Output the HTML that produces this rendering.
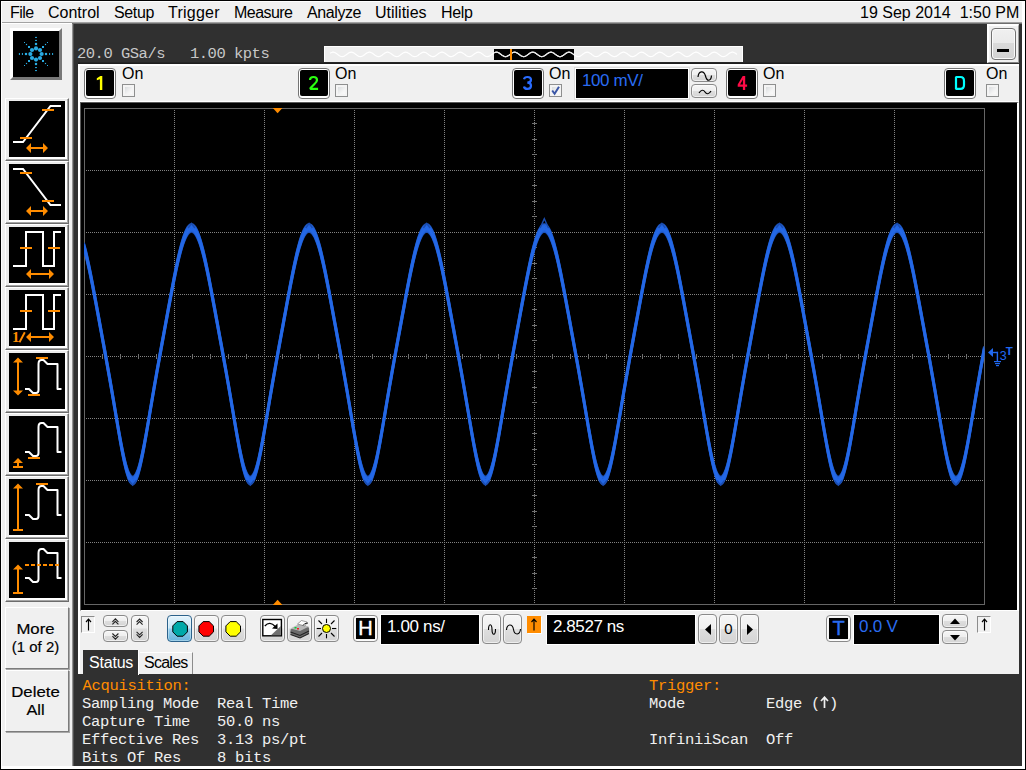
<!DOCTYPE html>
<html>
<head>
<meta charset="utf-8">
<title>Oscilloscope</title>
<style>
html,body{margin:0;padding:0;}
body{width:1026px;height:770px;overflow:hidden;background:#f0f0f0;position:relative;font-family:"Liberation Sans",sans-serif;color:#000;}
.abs{position:absolute;}
#frame{left:0;top:0;width:1024px;height:768px;border:1px solid #000;}
#whiteR{left:1022px;top:1px;width:3px;height:768px;background:#fff;}
#whiteB{left:1px;top:766px;width:1024px;height:3px;background:#fff;}
#menubar{left:1px;top:1px;width:1024px;height:21px;background:#f0f0f0;border-bottom:1px solid #a2a2a2;}#wl{left:1px;top:1px;width:1px;height:768px;background:#fff;}#wt{left:1px;top:1px;width:1024px;height:1px;background:#fff;}#wm{left:1px;top:23px;width:71px;height:1px;background:#fff;}#mline{left:72px;top:23px;width:950px;height:1px;background:#6e6e6e;}
.mi{position:absolute;top:3px;font-size:16px;line-height:18px;white-space:nowrap;}
#dark{left:72px;top:24px;width:950px;height:742px;background:#303030;}
#split{left:72px;top:24px;width:6px;height:742px;background:linear-gradient(90deg,#929292 0,#929292 1px,#505050 1px,#505050 2px,#303030 2px,#303030 100%);}
#leftp{left:1px;top:23px;width:71px;height:743px;background:#f0f0f0;}
.mono{font-family:"Liberation Mono",monospace;}
#acq,#acq2{top:44.5px;font-size:15.5px;line-height:18px;color:#c8c8c8;white-space:pre;letter-spacing:-0.5px;}#acq{left:77px;}#acq2{left:190px;}
#membar{left:324px;top:46px;width:419px;height:16px;background:#eeeeee;box-shadow:inset 0 1px 0 #fff, inset 1px 0 0 #fff, inset -1px 0 0 #fff;}
#memblk{left:494px;top:49px;width:80px;height:11px;background:#000;}
#memor{left:510px;top:49px;width:2px;height:11px;background:#ff8c00;}#dline{left:78px;top:62px;width:909px;height:2px;background:linear-gradient(180deg,#2a2a2a,#1a1a1a);}
#minarea{left:987px;top:24px;width:32px;height:39px;background:#f0f0f0;box-sizing:border-box;border-left:2px solid #fff;border-top:2px solid #fff;border-right:1px solid #a0a0a0;border-bottom:1px solid #808080;}
#minbtn{left:991px;top:28px;width:23px;height:30px;border:1px solid #727272;border-radius:4px;background:linear-gradient(180deg,#f0f0f0 0,#eaeaea 47%,#dadada 47%,#d2d2d2 100%);box-shadow:inset 0 0 0 1px #fafafa;}
#minbtn i{position:absolute;left:5px;top:20px;width:12px;height:3px;background:#000;}
#chrow{left:78px;top:64px;width:941px;height:38px;background:#f0f0f0;border-top:2px solid #fff;border-bottom:1px solid #fff;box-sizing:border-box;}
.chb{position:absolute;top:68px;width:30px;height:29px;border:1px solid #747474;border-radius:4px;background:#fff;}
.chb b{position:absolute;left:1px;top:1px;width:28px;height:26px;background:#000;border-radius:2px;font-weight:normal;font-size:19.5px;line-height:26px;text-align:center;-webkit-text-stroke:0.45px currentColor;}
.on{position:absolute;top:65px;font-size:16px;line-height:18px;}
.cb{position:absolute;top:84px;width:11px;height:11px;border:1px solid #8e8f8f;background:linear-gradient(135deg,#cfd3d6 0,#f4f4f4 60%,#fff 100%);box-shadow:inset 0 0 0 2px #f4f4f4;}
#scope{left:80px;top:102px;width:936px;height:507px;background:#000;border-left:1px solid #5a5a5a;border-top:1px solid #5a5a5a;border-right:2px solid #fff;border-bottom:1px solid #fff;}
#toolbar{left:78px;top:611px;width:941px;height:63px;background:#f0f0f0;}#wstrip{left:78px;top:64px;width:2px;height:610px;background:#fff;}
#status{left:78px;top:674px;width:944px;height:92px;background:#303030;}
.st{position:absolute;font-size:15.5px;letter-spacing:-0.3px;line-height:18px;color:#f0f0f0;white-space:pre;font-family:"Liberation Mono",monospace;}
.or{color:#ff8c00;}

.ib{position:absolute;left:5px;width:62px;height:61px;border-top:1px solid #fff;border-left:1px solid #fff;border-right:1px solid #6c6c6c;border-bottom:1px solid #6c6c6c;background:#ececec;box-shadow:inset -1px -1px 0 #a6a6a6;}
.ib svg{position:absolute;left:3px;top:2px;box-shadow:2px 0 0 #fff,0 2px 0 #fff,2px 2px 0 #fff;}
.lb{position:absolute;left:5px;width:62px;height:60px;border-top:1px solid #fff;border-left:1px solid #fff;border-right:1px solid #7c7c7c;border-bottom:1px solid #7c7c7c;background:#f0f0f0;box-shadow:1px 1px 0 #a8a8a8;font-size:14px;line-height:18px;text-align:center;}
.lbl{position:absolute;left:0;width:71px;text-align:center;font-size:14.5px;line-height:18px;-webkit-text-stroke:0.18px #000;white-space:nowrap;}
.tb{position:absolute;border:1px solid #8a8a8a;border-radius:4px;background:linear-gradient(180deg,#f6f6f6 0,#efefef 49%,#dedede 51%,#d4d4d4 100%);box-sizing:border-box;box-shadow:inset 0 0 0 1px rgba(255,255,255,.6);}
.tb svg{position:absolute;left:0;top:0;}
.fld{position:absolute;background:#000;border:1px solid #fff;box-sizing:border-box;font-size:17px;line-height:20px;color:#fff;white-space:nowrap;}
.sunk{position:absolute;box-sizing:border-box;border-top:1px solid #8c8c8c;border-left:1px solid #8c8c8c;border-right:1px solid #fff;border-bottom:1px solid #fff;background:#f0f0f0;}
.tab{position:absolute;font-size:16px;line-height:20px;white-space:nowrap;box-sizing:border-box;}
</style>
</head>
<body>
<div id="dark" class="abs"></div>
<div id="split" class="abs"></div>
<div id="leftp" class="abs"></div><div id="mline" class="abs"></div>
<div id="menubar" class="abs">
 <span class="mi" style="left:9px;letter-spacing:-0.55px">File</span>
 <span class="mi" style="left:47px">Control</span>
 <span class="mi" style="left:113px;letter-spacing:-0.35px">Setup</span>
 <span class="mi" style="left:167px;letter-spacing:0.25px">Trigger</span>
 <span class="mi" style="left:233px;letter-spacing:-0.55px">Measure</span>
 <span class="mi" style="left:306px;letter-spacing:-0.4px">Analyze</span>
 <span class="mi" style="left:374px">Utilities</span>
 <span class="mi" style="left:440px;letter-spacing:-0.3px">Help</span>
 <span class="mi" style="left:859px">19 Sep 2014&nbsp; 1:50 PM</span>
</div>

<!-- left panel -->
<div class="abs" style="left:10px;top:28px;width:46px;height:46px;border:3px solid;border-color:#fff #787878 #787878 #fff;background:#000"><svg width="46" height="46" viewBox="-23 -23 46 46" style="position:absolute;left:0;top:0"><circle cx="5.6" cy="0.0" r="2.1" fill="#29abe2"/><circle cx="4.0" cy="4.0" r="2.1" fill="#29abe2"/><circle cx="0.0" cy="5.6" r="2.1" fill="#29abe2"/><circle cx="-4.0" cy="4.0" r="2.1" fill="#29abe2"/><circle cx="-5.6" cy="0.0" r="2.1" fill="#29abe2"/><circle cx="-4.0" cy="-4.0" r="2.1" fill="#29abe2"/><circle cx="-0.0" cy="-5.6" r="2.1" fill="#29abe2"/><circle cx="4.0" cy="-4.0" r="2.1" fill="#29abe2"/><rect x="8.9" y="-1.1" width="2.2" height="2.2" fill="#29abe2"/><rect x="13.1" y="-1" width="1" height="2" fill="#29abe2"/><rect x="16.1" y="-1" width="1" height="2" fill="#29abe2"/><rect x="6.0" y="6.0" width="2" height="2" fill="#29abe2"/><rect x="8.9" y="8.9" width="1.2" height="1.2" fill="#29abe2"/><rect x="11.0" y="11.0" width="1" height="1" fill="#29abe2"/><rect x="-1.1" y="8.9" width="2.2" height="2.2" fill="#29abe2"/><rect x="-1" y="13.1" width="2" height="1" fill="#29abe2"/><rect x="-1" y="16.1" width="2" height="1" fill="#29abe2"/><rect x="-8.0" y="6.0" width="2" height="2" fill="#29abe2"/><rect x="-10.1" y="8.9" width="1.2" height="1.2" fill="#29abe2"/><rect x="-12.0" y="11.0" width="1" height="1" fill="#29abe2"/><rect x="-11.1" y="-1.1" width="2.2" height="2.2" fill="#29abe2"/><rect x="-14.1" y="-1" width="1" height="2" fill="#29abe2"/><rect x="-17.1" y="-1" width="1" height="2" fill="#29abe2"/><rect x="-8.0" y="-8.0" width="2" height="2" fill="#29abe2"/><rect x="-10.1" y="-10.1" width="1.2" height="1.2" fill="#29abe2"/><rect x="-12.0" y="-12.0" width="1" height="1" fill="#29abe2"/><rect x="-1.1" y="-11.1" width="2.2" height="2.2" fill="#29abe2"/><rect x="-1" y="-14.1" width="2" height="1" fill="#29abe2"/><rect x="-1" y="-17.1" width="2" height="1" fill="#29abe2"/><rect x="6.0" y="-8.0" width="2" height="2" fill="#29abe2"/><rect x="8.9" y="-10.1" width="1.2" height="1.2" fill="#29abe2"/><rect x="11.0" y="-12.0" width="1" height="1" fill="#29abe2"/></svg></div>
<div class="ib" style="top:98px"><svg width="56" height="56" viewBox="0 0 56 56" style="background:#000" shape-rendering="crispEdges"><path d="M4 41 h10 L41.5 5 h10.5" fill="none" stroke="#fff" stroke-width="2" shape-rendering="geometricPrecision"/><rect x="33" y="8" width="12" height="2" fill="#ff8c00"/><rect x="11" y="36" width="12" height="2" fill="#ff8c00"/><path d="M17 47 l5 -5 v4 h12 v-4 l5 5 l-5 5 v-4 h-12 v4 z" fill="#ff8c00" shape-rendering="geometricPrecision"/></svg></div>
<div class="ib" style="top:161px"><svg width="56" height="56" viewBox="0 0 56 56" style="background:#000" shape-rendering="crispEdges"><path d="M4 5 h10 L41.5 41 h10.5" fill="none" stroke="#fff" stroke-width="2" shape-rendering="geometricPrecision"/><rect x="11" y="8" width="12" height="2" fill="#ff8c00"/><rect x="33" y="36" width="12" height="2" fill="#ff8c00"/><path d="M17 47 l5 -5 v4 h12 v-4 l5 5 l-5 5 v-4 h-12 v4 z" fill="#ff8c00" shape-rendering="geometricPrecision"/></svg></div>
<div class="ib" style="top:224px"><svg width="56" height="56" viewBox="0 0 56 56" style="background:#000" shape-rendering="crispEdges"><path d="M4 39 h13 v-34 h17 v34 h11 v-34 h7" fill="none" stroke="#fff" stroke-width="2"/><rect x="11" y="20" width="12" height="2" fill="#ff8c00"/><rect x="39" y="20" width="12" height="2" fill="#ff8c00"/><path d="M17 47 l5 -5 v4 h18 v-4 l5 5 l-5 5 v-4 h-18 v4 z" fill="#ff8c00" shape-rendering="geometricPrecision"/></svg></div>
<div class="ib" style="top:287px"><svg width="56" height="56" viewBox="0 0 56 56" style="background:#000" shape-rendering="crispEdges"><path d="M4 39 h13 v-34 h17 v34 h11 v-34 h7" fill="none" stroke="#fff" stroke-width="2"/><rect x="11" y="20" width="12" height="2" fill="#ff8c00"/><rect x="39" y="20" width="12" height="2" fill="#ff8c00"/><path d="M17 47 l5 -5 v4 h18 v-4 l5 5 l-5 5 v-4 h-18 v4 z" fill="#ff8c00" shape-rendering="geometricPrecision"/><text x="3" y="52" font-family="Liberation Serif" font-weight="bold" font-size="15" fill="#ff8c00" shape-rendering="geometricPrecision">1</text><path d="M10.500 52.300 L15.800 42.300" stroke="#ff8c00" stroke-width="1.900" shape-rendering="geometricPrecision"/></svg></div>
<div class="ib" style="top:350px"><svg width="56" height="56" viewBox="0 0 56 56" style="background:#000" shape-rendering="crispEdges"><path d="M16 36 h4 l4 4 h3 q2.5 0 2.5 -3 v-26 q0 -4 3 -4 h2 l4 4 h10 v25 h4" fill="none" stroke="#fff" stroke-width="2" stroke-linejoin="round" shape-rendering="geometricPrecision"/><rect x="27" y="4" width="12" height="2" fill="#ff8c00"/><rect x="19" y="41" width="12" height="2" fill="#ff8c00"/><path d="M9 4.5 l5 5 h-4 v28 h4 l-5 5 l-5 -5 h4 v-28 h-4 z" fill="#ff8c00" shape-rendering="geometricPrecision"/></svg></div>
<div class="ib" style="top:413px"><svg width="56" height="56" viewBox="0 0 56 56" style="background:#000" shape-rendering="crispEdges"><path d="M16 36 h4 l4 4 h3 q2.5 0 2.5 -3 v-26 q0 -4 3 -4 h2 l4 4 h10 v25 h4" fill="none" stroke="#fff" stroke-width="2" stroke-linejoin="round" shape-rendering="geometricPrecision"/><rect x="19" y="41" width="12" height="2" fill="#ff8c00"/><path d="M9 42 l5 5 h-4 v3 h4 v2 h-10 v-2 h4 v-3 h-4 z" fill="#ff8c00" shape-rendering="geometricPrecision"/></svg></div>
<div class="ib" style="top:476px"><svg width="56" height="56" viewBox="0 0 56 56" style="background:#000" shape-rendering="crispEdges"><path d="M16 36 h4 l4 4 h3 q2.5 0 2.5 -3 v-26 q0 -4 3 -4 h2 l4 4 h10 v25 h4" fill="none" stroke="#fff" stroke-width="2" stroke-linejoin="round" shape-rendering="geometricPrecision"/><rect x="27" y="4" width="12" height="2" fill="#ff8c00"/><path d="M9 4.5 l5 5 h-4 v40.5 h4 v2 h-10 v-2 h4 v-40.5 h-4 z" fill="#ff8c00" shape-rendering="geometricPrecision"/></svg></div>
<div class="ib" style="top:539px"><svg width="56" height="56" viewBox="0 0 56 56" style="background:#000" shape-rendering="crispEdges"><path d="M16 36 h4 l4 4 h3 q2.5 0 2.5 -3 v-26 q0 -4 3 -4 h2 l4 4 h10 v25 h4" fill="none" stroke="#fff" stroke-width="2" stroke-linejoin="round" shape-rendering="geometricPrecision"/><line x1="16" y1="23" x2="50" y2="23" stroke="#ff8c00" stroke-width="2" stroke-dasharray="4 2"/><path d="M9 22.5 l5 5 h-4 v22.5 h4 v2 h-10 v-2 h4 v-22.5 h-4 z" fill="#ff8c00" shape-rendering="geometricPrecision"/></svg></div>

<div class="lb" style="top:607px"></div>
<div class="lb" style="top:670px"></div>
<div class="lbl" style="top:619.7px;transform:scaleX(1.155)">More</div>
<div class="lbl" style="top:637.7px;transform:scaleX(1.03)">(1 of 2)</div>
<div class="lbl" style="top:682.8px;transform:scaleX(1.157)">Delete</div>
<div class="lbl" style="top:700.5px;transform:scaleX(1.125)">All</div>

<!-- top dark band -->
<div id="acq" class="abs mono">20.0 GSa/s</div><div id="acq2" class="abs mono">1.00 kpts</div>
<div id="membar" class="abs"></div>
<div id="memblk" class="abs"></div>
<svg class="abs" style="left:0;top:0" width="1026" height="70"><path d="M330.0 53.3 L330.5 53.0 L331.0 52.8 L331.5 52.5 L332.0 52.4 L332.5 52.2 L333.0 52.2 L333.5 52.2 L334.0 52.3 L334.5 52.5 L335.0 52.7 L335.5 52.9 L336.0 53.2 L336.5 53.6 L337.0 53.9 L337.5 54.3 L338.0 54.7 L338.5 55.0 L339.0 55.4 L339.5 55.7 L340.0 56.0 L340.5 56.2 L341.0 56.4 L341.5 56.5 L342.0 56.6 L342.5 56.6 L343.0 56.5 L343.5 56.4 L344.0 56.2 L344.5 55.9 L345.0 55.6 L345.5 55.3 L346.0 54.9 L346.5 54.6 L347.0 54.2 L347.5 53.8 L348.0 53.5 L348.5 53.1 L349.0 52.8 L349.5 52.6 L350.0 52.4 L350.5 52.3 L351.0 52.2 L351.5 52.2 L352.0 52.3 L352.5 52.4 L353.0 52.6 L353.5 52.8 L354.0 53.1 L354.5 53.5 L355.0 53.8 L355.5 54.2 L356.0 54.6 L356.5 54.9 L357.0 55.3 L357.5 55.6 L358.0 55.9 L358.5 56.2 L359.0 56.4 L359.5 56.5 L360.0 56.6 L360.5 56.6 L361.0 56.5 L361.5 56.4 L362.0 56.2 L362.5 56.0 L363.0 55.7 L363.5 55.4 L364.0 55.0 L364.5 54.7 L365.0 54.3 L365.5 53.9 L366.0 53.6 L366.5 53.2 L367.0 52.9 L367.5 52.7 L368.0 52.5 L368.5 52.3 L369.0 52.2 L369.5 52.2 L370.0 52.2 L370.5 52.4 L371.0 52.5 L371.5 52.8 L372.0 53.0 L372.5 53.3 L373.0 53.7 L373.5 54.1 L374.0 54.4 L374.5 54.8 L375.0 55.2 L375.5 55.5 L376.0 55.8 L376.5 56.1 L377.0 56.3 L377.5 56.5 L378.0 56.6 L378.5 56.6 L379.0 56.6 L379.5 56.5 L380.0 56.3 L380.5 56.1 L381.0 55.8 L381.5 55.5 L382.0 55.2 L382.5 54.8 L383.0 54.4 L383.5 54.0 L384.0 53.7 L384.5 53.3 L385.0 53.0 L385.5 52.7 L386.0 52.5 L386.5 52.3 L387.0 52.2 L387.5 52.2 L388.0 52.2 L388.5 52.3 L389.0 52.5 L389.5 52.7 L390.0 52.9 L390.5 53.3 L391.0 53.6 L391.5 54.0 L392.0 54.3 L392.5 54.7 L393.0 55.1 L393.5 55.4 L394.0 55.8 L394.5 56.0 L395.0 56.3 L395.5 56.4 L396.0 56.5 L396.5 56.6 L397.0 56.6 L397.5 56.5 L398.0 56.4 L398.5 56.2 L399.0 55.9 L399.5 55.6 L400.0 55.3 L400.5 54.9 L401.0 54.5 L401.5 54.1 L402.0 53.8 L402.5 53.4 L403.0 53.1 L403.5 52.8 L404.0 52.6 L404.5 52.4 L405.0 52.3 L405.5 52.2 L406.0 52.2 L406.5 52.3 L407.0 52.4 L407.5 52.6 L408.0 52.9 L408.5 53.2 L409.0 53.5 L409.5 53.8 L410.0 54.2 L410.5 54.6 L411.0 55.0 L411.5 55.3 L412.0 55.7 L412.5 56.0 L413.0 56.2 L413.5 56.4 L414.0 56.5 L414.5 56.6 L415.0 56.6 L415.5 56.5 L416.0 56.4 L416.5 56.2 L417.0 56.0 L417.5 55.7 L418.0 55.4 L418.5 55.0 L419.0 54.6 L419.5 54.3 L420.0 53.9 L420.5 53.5 L421.0 53.2 L421.5 52.9 L422.0 52.6 L422.5 52.4 L423.0 52.3 L423.5 52.2 L424.0 52.2 L424.5 52.3 L425.0 52.4 L425.5 52.5 L426.0 52.8 L426.5 53.1 L427.0 53.4 L427.5 53.7 L428.0 54.1 L428.5 54.5 L429.0 54.9 L429.5 55.2 L430.0 55.6 L430.5 55.9 L431.0 56.1 L431.5 56.3 L432.0 56.5 L432.5 56.6 L433.0 56.6 L433.5 56.6 L434.0 56.4 L434.5 56.3 L435.0 56.1 L435.5 55.8 L436.0 55.5 L436.5 55.1 L437.0 54.8 L437.5 54.4 L438.0 54.0 L438.5 53.6 L439.0 53.3 L439.5 53.0 L440.0 52.7 L440.5 52.5 L441.0 52.3 L441.5 52.2 L442.0 52.2 L442.5 52.2 L443.0 52.3 L443.5 52.5 L444.0 52.7 L444.5 53.0 L445.0 53.3 L445.5 53.6 L446.0 54.0 L446.5 54.4 L447.0 54.8 L447.5 55.1 L448.0 55.5 L448.5 55.8 L449.0 56.1 L449.5 56.3 L450.0 56.4 L450.5 56.6 L451.0 56.6 L451.5 56.6 L452.0 56.5 L452.5 56.3 L453.0 56.1 L453.5 55.9 L454.0 55.6 L454.5 55.2 L455.0 54.9 L455.5 54.5 L456.0 54.1 L456.5 53.7 L457.0 53.4 L457.5 53.1 L458.0 52.8 L458.5 52.5 L459.0 52.4 L459.5 52.3 L460.0 52.2 L460.5 52.2 L461.0 52.3 L461.5 52.4 L462.0 52.6 L462.5 52.9 L463.0 53.2 L463.5 53.5 L464.0 53.9 L464.5 54.3 L465.0 54.6 L465.5 55.0 L466.0 55.4 L466.5 55.7 L467.0 56.0 L467.5 56.2 L468.0 56.4 L468.5 56.5 L469.0 56.6 L469.5 56.6 L470.0 56.5 L470.5 56.4 L471.0 56.2 L471.5 56.0 L472.0 55.7 L472.5 55.3 L473.0 55.0 L473.5 54.6 L474.0 54.2 L474.5 53.8 L475.0 53.5 L475.5 53.2 L476.0 52.9 L476.5 52.6 L477.0 52.4 L477.5 52.3 L478.0 52.2 L478.5 52.2 L479.0 52.3 L479.5 52.4 L480.0 52.6 L480.5 52.8 L481.0 53.1 L481.5 53.4 L482.0 53.8 L482.5 54.1 L483.0 54.5 L483.5 54.9 L484.0 55.3 L484.5 55.6 L485.0 55.9 L485.5 56.2 L486.0 56.4 L486.5 56.5 L487.0 56.6 L487.5 56.6 L488.0 56.5 L488.5 56.4 L489.0 56.3 L489.5 56.0 L490.0 55.8 L490.5 55.4 L491.0 55.1 L491.5 54.7 L492.0 54.3 L492.5 54.0 L493.0 53.6 L493.5 53.3 L494.0 52.9 L494.5 52.7 L495.0 52.5 L495.5 52.3 L496.0 52.2 L496.5 52.2 L497.0 52.2 L497.5 52.3 L498.0 52.5 L498.5 52.7 L499.0 53.0 L499.5 53.3 L500.0 53.7 L500.5 54.0 L501.0 54.4 L501.5 54.8 L502.0 55.2 L502.5 55.5 L503.0 55.8 L503.5 56.1 L504.0 56.3 L504.5 56.5 L505.0 56.6 L505.5 56.6 L506.0 56.6 L506.5 56.5 L507.0 56.3 L507.5 56.1 L508.0 55.8 L508.5 55.5 L509.0 55.2 L509.5 54.8 L510.0 54.4 L510.5 54.1 L511.0 53.7 L511.5 53.3 L512.0 53.0 L512.5 52.8 L513.0 52.5 L513.5 52.4 L514.0 52.2 L514.5 52.2 L515.0 52.2 L515.5 52.3 L516.0 52.5 L516.5 52.7 L517.0 52.9 L517.5 53.2 L518.0 53.6 L518.5 53.9 L519.0 54.3 L519.5 54.7 L520.0 55.0 L520.5 55.4 L521.0 55.7 L521.5 56.0 L522.0 56.2 L522.5 56.4 L523.0 56.5 L523.5 56.6 L524.0 56.6 L524.5 56.5 L525.0 56.4 L525.5 56.2 L526.0 55.9 L526.5 55.6 L527.0 55.3 L527.5 54.9 L528.0 54.6 L528.5 54.2 L529.0 53.8 L529.5 53.5 L530.0 53.1 L530.5 52.8 L531.0 52.6 L531.5 52.4 L532.0 52.3 L532.5 52.2 L533.0 52.2 L533.5 52.3 L534.0 52.4 L534.5 52.6 L535.0 52.8 L535.5 53.1 L536.0 53.5 L536.5 53.8 L537.0 54.2 L537.5 54.6 L538.0 54.9 L538.5 55.3 L539.0 55.6 L539.5 55.9 L540.0 56.2 L540.5 56.4 L541.0 56.5 L541.5 56.6 L542.0 56.6 L542.5 56.5 L543.0 56.4 L543.5 56.2 L544.0 56.0 L544.5 55.7 L545.0 55.4 L545.5 55.0 L546.0 54.7 L546.5 54.3 L547.0 53.9 L547.5 53.6 L548.0 53.2 L548.5 52.9 L549.0 52.7 L549.5 52.5 L550.0 52.3 L550.5 52.2 L551.0 52.2 L551.5 52.2 L552.0 52.4 L552.5 52.5 L553.0 52.8 L553.5 53.0 L554.0 53.3 L554.5 53.7 L555.0 54.1 L555.5 54.4 L556.0 54.8 L556.5 55.2 L557.0 55.5 L557.5 55.8 L558.0 56.1 L558.5 56.3 L559.0 56.5 L559.5 56.6 L560.0 56.6 L560.5 56.6 L561.0 56.5 L561.5 56.3 L562.0 56.1 L562.5 55.8 L563.0 55.5 L563.5 55.2 L564.0 54.8 L564.5 54.4 L565.0 54.0 L565.5 53.7 L566.0 53.3 L566.5 53.0 L567.0 52.7 L567.5 52.5 L568.0 52.3 L568.5 52.2 L569.0 52.2 L569.5 52.2 L570.0 52.3 L570.5 52.5 L571.0 52.7 L571.5 52.9 L572.0 53.3 L572.5 53.6 L573.0 54.0 L573.5 54.3 L574.0 54.7 L574.5 55.1 L575.0 55.4 L575.5 55.8 L576.0 56.0 L576.5 56.3 L577.0 56.4 L577.5 56.5 L578.0 56.6 L578.5 56.6 L579.0 56.5 L579.5 56.4 L580.0 56.2 L580.5 55.9 L581.0 55.6 L581.5 55.3 L582.0 54.9 L582.5 54.5 L583.0 54.1 L583.5 53.8 L584.0 53.4 L584.5 53.1 L585.0 52.8 L585.5 52.6 L586.0 52.4 L586.5 52.3 L587.0 52.2 L587.5 52.2 L588.0 52.3 L588.5 52.4 L589.0 52.6 L589.5 52.9 L590.0 53.2 L590.5 53.5 L591.0 53.8 L591.5 54.2 L592.0 54.6 L592.5 55.0 L593.0 55.3 L593.5 55.7 L594.0 56.0 L594.5 56.2 L595.0 56.4 L595.5 56.5 L596.0 56.6 L596.5 56.6 L597.0 56.5 L597.5 56.4 L598.0 56.2 L598.5 56.0 L599.0 55.7 L599.5 55.4 L600.0 55.0 L600.5 54.6 L601.0 54.3 L601.5 53.9 L602.0 53.5 L602.5 53.2 L603.0 52.9 L603.5 52.6 L604.0 52.4 L604.5 52.3 L605.0 52.2 L605.5 52.2 L606.0 52.3 L606.5 52.4 L607.0 52.5 L607.5 52.8 L608.0 53.1 L608.5 53.4 L609.0 53.7 L609.5 54.1 L610.0 54.5 L610.5 54.9 L611.0 55.2 L611.5 55.6 L612.0 55.9 L612.5 56.1 L613.0 56.3 L613.5 56.5 L614.0 56.6 L614.5 56.6 L615.0 56.6 L615.5 56.4 L616.0 56.3 L616.5 56.1 L617.0 55.8 L617.5 55.5 L618.0 55.1 L618.5 54.8 L619.0 54.4 L619.5 54.0 L620.0 53.6 L620.5 53.3 L621.0 53.0 L621.5 52.7 L622.0 52.5 L622.5 52.3 L623.0 52.2 L623.5 52.2 L624.0 52.2 L624.5 52.3 L625.0 52.5 L625.5 52.7 L626.0 53.0 L626.5 53.3 L627.0 53.6 L627.5 54.0 L628.0 54.4 L628.5 54.8 L629.0 55.1 L629.5 55.5 L630.0 55.8 L630.5 56.1 L631.0 56.3 L631.5 56.4 L632.0 56.6 L632.5 56.6 L633.0 56.6 L633.5 56.5 L634.0 56.3 L634.5 56.1 L635.0 55.9 L635.5 55.6 L636.0 55.2 L636.5 54.9 L637.0 54.5 L637.5 54.1 L638.0 53.7 L638.5 53.4 L639.0 53.1 L639.5 52.8 L640.0 52.5 L640.5 52.4 L641.0 52.3 L641.5 52.2 L642.0 52.2 L642.5 52.3 L643.0 52.4 L643.5 52.6 L644.0 52.9 L644.5 53.2 L645.0 53.5 L645.5 53.9 L646.0 54.3 L646.5 54.6 L647.0 55.0 L647.5 55.4 L648.0 55.7 L648.5 56.0 L649.0 56.2 L649.5 56.4 L650.0 56.5 L650.5 56.6 L651.0 56.6 L651.5 56.5 L652.0 56.4 L652.5 56.2 L653.0 56.0 L653.5 55.7 L654.0 55.3 L654.5 55.0 L655.0 54.6 L655.5 54.2 L656.0 53.8 L656.5 53.5 L657.0 53.2 L657.5 52.9 L658.0 52.6 L658.5 52.4 L659.0 52.3 L659.5 52.2 L660.0 52.2 L660.5 52.3 L661.0 52.4 L661.5 52.6 L662.0 52.8 L662.5 53.1 L663.0 53.4 L663.5 53.8 L664.0 54.1 L664.5 54.5 L665.0 54.9 L665.5 55.3 L666.0 55.6 L666.5 55.9 L667.0 56.2 L667.5 56.4 L668.0 56.5 L668.5 56.6 L669.0 56.6 L669.5 56.5 L670.0 56.4 L670.5 56.3 L671.0 56.0 L671.5 55.8 L672.0 55.4 L672.5 55.1 L673.0 54.7 L673.5 54.3 L674.0 54.0 L674.5 53.6 L675.0 53.3 L675.5 52.9 L676.0 52.7 L676.5 52.5 L677.0 52.3 L677.5 52.2 L678.0 52.2 L678.5 52.2 L679.0 52.3 L679.5 52.5 L680.0 52.7 L680.5 53.0 L681.0 53.3 L681.5 53.7 L682.0 54.0 L682.5 54.4 L683.0 54.8 L683.5 55.2 L684.0 55.5 L684.5 55.8 L685.0 56.1 L685.5 56.3 L686.0 56.5 L686.5 56.6 L687.0 56.6 L687.5 56.6 L688.0 56.5 L688.5 56.3 L689.0 56.1 L689.5 55.8 L690.0 55.5 L690.5 55.2 L691.0 54.8 L691.5 54.4 L692.0 54.1 L692.5 53.7 L693.0 53.3 L693.5 53.0 L694.0 52.8 L694.5 52.5 L695.0 52.4 L695.5 52.2 L696.0 52.2 L696.5 52.2 L697.0 52.3 L697.5 52.5 L698.0 52.7 L698.5 52.9 L699.0 53.2 L699.5 53.6 L700.0 53.9 L700.5 54.3 L701.0 54.7 L701.5 55.0 L702.0 55.4 L702.5 55.7 L703.0 56.0 L703.5 56.2 L704.0 56.4 L704.5 56.5 L705.0 56.6 L705.5 56.6 L706.0 56.5 L706.5 56.4 L707.0 56.2 L707.5 55.9 L708.0 55.6 L708.5 55.3 L709.0 54.9 L709.5 54.6 L710.0 54.2 L710.5 53.8 L711.0 53.5 L711.5 53.1 L712.0 52.8 L712.5 52.6 L713.0 52.4 L713.5 52.3 L714.0 52.2 L714.5 52.2 L715.0 52.3 L715.5 52.4 L716.0 52.6 L716.5 52.8 L717.0 53.1 L717.5 53.5 L718.0 53.8 L718.5 54.2 L719.0 54.6 L719.5 54.9 L720.0 55.3 L720.5 55.6 L721.0 55.9 L721.5 56.2 L722.0 56.4 L722.5 56.5 L723.0 56.6 L723.5 56.6 L724.0 56.5 L724.5 56.4 L725.0 56.2 L725.5 56.0 L726.0 55.7 L726.5 55.4 L727.0 55.0 L727.5 54.7 L728.0 54.3 L728.5 53.9 L729.0 53.6 L729.5 53.2 L730.0 52.9 L730.5 52.7 L731.0 52.5 L731.5 52.3 L732.0 52.2 L732.5 52.2 L733.0 52.2 L733.5 52.4 L734.0 52.5 L734.5 52.8 L735.0 53.0 L735.5 53.3 L736.0 53.7 L736.5 54.1 L737.0 54.4" fill="none" stroke="#ffffff" stroke-width="1.2"/><path d="M495.0 52.5 L495.5 52.3 L496.0 52.2 L496.5 52.2 L497.0 52.2 L497.5 52.3 L498.0 52.5 L498.5 52.7 L499.0 53.0 L499.5 53.3 L500.0 53.7 L500.5 54.0 L501.0 54.4 L501.5 54.8 L502.0 55.2 L502.5 55.5 L503.0 55.8 L503.5 56.1 L504.0 56.3 L504.5 56.5 L505.0 56.6 L505.5 56.6 L506.0 56.6 L506.5 56.5 L507.0 56.3 L507.5 56.1 L508.0 55.8 L508.5 55.5 L509.0 55.2 L509.5 54.8 L510.0 54.4 L510.5 54.1 L511.0 53.7 L511.5 53.3 L512.0 53.0 L512.5 52.8 L513.0 52.5 L513.5 52.4 L514.0 52.2 L514.5 52.2 L515.0 52.2 L515.5 52.3 L516.0 52.5 L516.5 52.7 L517.0 52.9 L517.5 53.2 L518.0 53.6 L518.5 53.9 L519.0 54.3 L519.5 54.7 L520.0 55.0 L520.5 55.4 L521.0 55.7 L521.5 56.0 L522.0 56.2 L522.5 56.4 L523.0 56.5 L523.5 56.6 L524.0 56.6 L524.5 56.5 L525.0 56.4 L525.5 56.2 L526.0 55.9 L526.5 55.6 L527.0 55.3 L527.5 54.9 L528.0 54.6 L528.5 54.2 L529.0 53.8 L529.5 53.5 L530.0 53.1 L530.5 52.8 L531.0 52.6 L531.5 52.4 L532.0 52.3 L532.5 52.2 L533.0 52.2 L533.5 52.3 L534.0 52.4 L534.5 52.6 L535.0 52.8 L535.5 53.1 L536.0 53.5 L536.5 53.8 L537.0 54.2 L537.5 54.6 L538.0 54.9 L538.5 55.3 L539.0 55.6 L539.5 55.9 L540.0 56.2 L540.5 56.4 L541.0 56.5 L541.5 56.6 L542.0 56.6 L542.5 56.5 L543.0 56.4 L543.5 56.2 L544.0 56.0 L544.5 55.7 L545.0 55.4 L545.5 55.0 L546.0 54.7 L546.5 54.3 L547.0 53.9 L547.5 53.6 L548.0 53.2 L548.5 52.9 L549.0 52.7 L549.5 52.5 L550.0 52.3 L550.5 52.2 L551.0 52.2 L551.5 52.2 L552.0 52.4 L552.5 52.5 L553.0 52.8 L553.5 53.0 L554.0 53.3 L554.5 53.7 L555.0 54.1 L555.5 54.4 L556.0 54.8 L556.5 55.2 L557.0 55.5 L557.5 55.8 L558.0 56.1 L558.5 56.3 L559.0 56.5 L559.5 56.6 L560.0 56.6 L560.5 56.6 L561.0 56.5 L561.5 56.3 L562.0 56.1 L562.5 55.8 L563.0 55.5 L563.5 55.2 L564.0 54.8 L564.5 54.4 L565.0 54.0 L565.5 53.7 L566.0 53.3 L566.5 53.0 L567.0 52.7 L567.5 52.5 L568.0 52.3 L568.5 52.2 L569.0 52.2 L569.5 52.2 L570.0 52.3 L570.5 52.5 L571.0 52.7 L571.5 52.9 L572.0 53.3 L572.5 53.6 L573.0 54.0" fill="none" stroke="#e8e8e8" stroke-width="1.1"/></svg>
<div id="memor" class="abs"></div>
<div id="minarea" class="abs"></div>
<div id="minbtn" class="abs"><i></i></div>

<!-- channel row -->
<div id="dline" class="abs"></div>
<div id="chrow" class="abs"></div>
<div class="chb" style="left:84px"><b><svg width="28" height="26" style="position:absolute;left:0;top:0"><path d="M16.3 5.900 V20 H13.900 V9.300 L10.800 10.300 V8.200 L14.400 5.900 Z" fill="#ffff00"/></svg></b></div>
<span class="on" style="left:122px">On</span><div class="cb" style="left:122px"></div>
<div class="chb" style="left:298px"><b><svg width="28" height="26" style="position:absolute;left:0;top:0"><path d="M10 10 Q10 7 13.500 7 Q17 7 17 10 Q17 12 14.500 14 L10.500 18 V18.900 H18.100" fill="none" stroke="#2aff10" stroke-width="2.2" stroke-linejoin="bevel"/></svg></b></div>
<span class="on" style="left:335px">On</span><div class="cb" style="left:335px"></div>
<div class="chb" style="left:512px"><b><svg width="28" height="26" style="position:absolute;left:0;top:0"><path d="M10 9.300 Q10.500 7 13.500 7 Q17 7 17 9.800 Q17 12.600 13.300 12.600 Q17 12.600 17 15.800 Q17 18.900 13.500 18.900 Q10.300 18.900 10 16.500" fill="none" stroke="#2a6cff" stroke-width="2.2" stroke-linejoin="bevel"/></svg></b></div>
<span class="on" style="left:549px">On</span><div class="cb" style="left:549px"><svg width="11" height="11" style="position:absolute;left:0;top:0"><path d="M2.200 5.500 L4.600 8.800 L9 1.800" fill="none" stroke="#3a56a6" stroke-width="2"/></svg></div>
<div class="chb" style="left:726px"><b><svg width="28" height="26" style="position:absolute;left:0;top:0"><path d="M17.200 5.900 V14.600 H19.100 V16.800 H17.200 V20 H14.900 V16.800 H9.700 V14.600 L14.700 5.900 Z M14.900 9.400 V14.600 H12.100 Z" fill="#ff0a46" fill-rule="evenodd"/></svg></b></div>
<span class="on" style="left:763px">On</span><div class="cb" style="left:763px"></div>
<div class="chb" style="left:944px"><b><svg width="28" height="26" style="position:absolute;left:0;top:0"><path d="M10 7 V18.900 H14.500 Q18 18.900 18 15 V11 Q18 7 14.500 7 Z" fill="none" stroke="#00ffff" stroke-width="2.2" stroke-linejoin="bevel"/></svg></b></div>
<span class="on" style="left:986px">On</span><div class="cb" style="left:986px"></div>

<!-- scope -->
<div id="scope" class="abs"></div>
<svg class="abs" style="left:0;top:0" width="1026" height="770" shape-rendering="crispEdges">
<rect x="84.5" y="108.5" width="900" height="496" fill="none" stroke="#666666" stroke-width="1"/>
<line x1="174.5" y1="110" x2="174.5" y2="604" stroke="#828282" stroke-width="1" stroke-dasharray="1 1"/>
<line x1="264.5" y1="110" x2="264.5" y2="604" stroke="#828282" stroke-width="1" stroke-dasharray="1 1"/>
<line x1="354.5" y1="110" x2="354.5" y2="604" stroke="#828282" stroke-width="1" stroke-dasharray="1 1"/>
<line x1="444.5" y1="110" x2="444.5" y2="604" stroke="#828282" stroke-width="1" stroke-dasharray="1 1"/>
<line x1="534.5" y1="110" x2="534.5" y2="604" stroke="#828282" stroke-width="1" stroke-dasharray="1 1"/>
<line x1="624.5" y1="110" x2="624.5" y2="604" stroke="#828282" stroke-width="1" stroke-dasharray="1 1"/>
<line x1="714.5" y1="110" x2="714.5" y2="604" stroke="#828282" stroke-width="1" stroke-dasharray="1 1"/>
<line x1="804.5" y1="110" x2="804.5" y2="604" stroke="#828282" stroke-width="1" stroke-dasharray="1 1"/>
<line x1="894.5" y1="110" x2="894.5" y2="604" stroke="#828282" stroke-width="1" stroke-dasharray="1 1"/>
<line x1="86" y1="170.5" x2="984" y2="170.5" stroke="#828282" stroke-width="1" stroke-dasharray="1 1"/>
<line x1="86" y1="232.5" x2="984" y2="232.5" stroke="#828282" stroke-width="1" stroke-dasharray="1 1"/>
<line x1="86" y1="294.5" x2="984" y2="294.5" stroke="#828282" stroke-width="1" stroke-dasharray="1 1"/>
<line x1="86" y1="356.5" x2="984" y2="356.5" stroke="#828282" stroke-width="1" stroke-dasharray="1 1"/>
<line x1="86" y1="418.5" x2="984" y2="418.5" stroke="#828282" stroke-width="1" stroke-dasharray="1 1"/>
<line x1="86" y1="480.5" x2="984" y2="480.5" stroke="#828282" stroke-width="1" stroke-dasharray="1 1"/>
<line x1="86" y1="542.5" x2="984" y2="542.5" stroke="#828282" stroke-width="1" stroke-dasharray="1 1"/>
<line x1="102.5" y1="354" x2="102.5" y2="359" stroke="#707070" stroke-width="1"/>
<line x1="120.5" y1="354" x2="120.5" y2="359" stroke="#707070" stroke-width="1"/>
<line x1="138.5" y1="354" x2="138.5" y2="359" stroke="#707070" stroke-width="1"/>
<line x1="156.5" y1="354" x2="156.5" y2="359" stroke="#707070" stroke-width="1"/>
<line x1="192.5" y1="354" x2="192.5" y2="359" stroke="#707070" stroke-width="1"/>
<line x1="210.5" y1="354" x2="210.5" y2="359" stroke="#707070" stroke-width="1"/>
<line x1="228.5" y1="354" x2="228.5" y2="359" stroke="#707070" stroke-width="1"/>
<line x1="246.5" y1="354" x2="246.5" y2="359" stroke="#707070" stroke-width="1"/>
<line x1="282.5" y1="354" x2="282.5" y2="359" stroke="#707070" stroke-width="1"/>
<line x1="300.5" y1="354" x2="300.5" y2="359" stroke="#707070" stroke-width="1"/>
<line x1="318.5" y1="354" x2="318.5" y2="359" stroke="#707070" stroke-width="1"/>
<line x1="336.5" y1="354" x2="336.5" y2="359" stroke="#707070" stroke-width="1"/>
<line x1="372.5" y1="354" x2="372.5" y2="359" stroke="#707070" stroke-width="1"/>
<line x1="390.5" y1="354" x2="390.5" y2="359" stroke="#707070" stroke-width="1"/>
<line x1="408.5" y1="354" x2="408.5" y2="359" stroke="#707070" stroke-width="1"/>
<line x1="426.5" y1="354" x2="426.5" y2="359" stroke="#707070" stroke-width="1"/>
<line x1="462.5" y1="354" x2="462.5" y2="359" stroke="#707070" stroke-width="1"/>
<line x1="480.5" y1="354" x2="480.5" y2="359" stroke="#707070" stroke-width="1"/>
<line x1="498.5" y1="354" x2="498.5" y2="359" stroke="#707070" stroke-width="1"/>
<line x1="516.5" y1="354" x2="516.5" y2="359" stroke="#707070" stroke-width="1"/>
<line x1="552.5" y1="354" x2="552.5" y2="359" stroke="#707070" stroke-width="1"/>
<line x1="570.5" y1="354" x2="570.5" y2="359" stroke="#707070" stroke-width="1"/>
<line x1="588.5" y1="354" x2="588.5" y2="359" stroke="#707070" stroke-width="1"/>
<line x1="606.5" y1="354" x2="606.5" y2="359" stroke="#707070" stroke-width="1"/>
<line x1="642.5" y1="354" x2="642.5" y2="359" stroke="#707070" stroke-width="1"/>
<line x1="660.5" y1="354" x2="660.5" y2="359" stroke="#707070" stroke-width="1"/>
<line x1="678.5" y1="354" x2="678.5" y2="359" stroke="#707070" stroke-width="1"/>
<line x1="696.5" y1="354" x2="696.5" y2="359" stroke="#707070" stroke-width="1"/>
<line x1="732.5" y1="354" x2="732.5" y2="359" stroke="#707070" stroke-width="1"/>
<line x1="750.5" y1="354" x2="750.5" y2="359" stroke="#707070" stroke-width="1"/>
<line x1="768.5" y1="354" x2="768.5" y2="359" stroke="#707070" stroke-width="1"/>
<line x1="786.5" y1="354" x2="786.5" y2="359" stroke="#707070" stroke-width="1"/>
<line x1="822.5" y1="354" x2="822.5" y2="359" stroke="#707070" stroke-width="1"/>
<line x1="840.5" y1="354" x2="840.5" y2="359" stroke="#707070" stroke-width="1"/>
<line x1="858.5" y1="354" x2="858.5" y2="359" stroke="#707070" stroke-width="1"/>
<line x1="876.5" y1="354" x2="876.5" y2="359" stroke="#707070" stroke-width="1"/>
<line x1="912.5" y1="354" x2="912.5" y2="359" stroke="#707070" stroke-width="1"/>
<line x1="930.5" y1="354" x2="930.5" y2="359" stroke="#707070" stroke-width="1"/>
<line x1="948.5" y1="354" x2="948.5" y2="359" stroke="#707070" stroke-width="1"/>
<line x1="966.5" y1="354" x2="966.5" y2="359" stroke="#707070" stroke-width="1"/>
<line x1="532" y1="123.5" x2="537" y2="123.5" stroke="#707070" stroke-width="1"/>
<line x1="532" y1="139.5" x2="537" y2="139.5" stroke="#707070" stroke-width="1"/>
<line x1="532" y1="154.5" x2="537" y2="154.5" stroke="#707070" stroke-width="1"/>
<line x1="532" y1="185.5" x2="537" y2="185.5" stroke="#707070" stroke-width="1"/>
<line x1="532" y1="201.5" x2="537" y2="201.5" stroke="#707070" stroke-width="1"/>
<line x1="532" y1="216.5" x2="537" y2="216.5" stroke="#707070" stroke-width="1"/>
<line x1="532" y1="247.5" x2="537" y2="247.5" stroke="#707070" stroke-width="1"/>
<line x1="532" y1="263.5" x2="537" y2="263.5" stroke="#707070" stroke-width="1"/>
<line x1="532" y1="278.5" x2="537" y2="278.5" stroke="#707070" stroke-width="1"/>
<line x1="532" y1="309.5" x2="537" y2="309.5" stroke="#707070" stroke-width="1"/>
<line x1="532" y1="325.5" x2="537" y2="325.5" stroke="#707070" stroke-width="1"/>
<line x1="532" y1="340.5" x2="537" y2="340.5" stroke="#707070" stroke-width="1"/>
<line x1="532" y1="371.5" x2="537" y2="371.5" stroke="#707070" stroke-width="1"/>
<line x1="532" y1="387.5" x2="537" y2="387.5" stroke="#707070" stroke-width="1"/>
<line x1="532" y1="402.5" x2="537" y2="402.5" stroke="#707070" stroke-width="1"/>
<line x1="532" y1="433.5" x2="537" y2="433.5" stroke="#707070" stroke-width="1"/>
<line x1="532" y1="449.5" x2="537" y2="449.5" stroke="#707070" stroke-width="1"/>
<line x1="532" y1="464.5" x2="537" y2="464.5" stroke="#707070" stroke-width="1"/>
<line x1="532" y1="495.5" x2="537" y2="495.5" stroke="#707070" stroke-width="1"/>
<line x1="532" y1="511.5" x2="537" y2="511.5" stroke="#707070" stroke-width="1"/>
<line x1="532" y1="526.5" x2="537" y2="526.5" stroke="#707070" stroke-width="1"/>
<line x1="532" y1="557.5" x2="537" y2="557.5" stroke="#707070" stroke-width="1"/>
<line x1="532" y1="573.5" x2="537" y2="573.5" stroke="#707070" stroke-width="1"/>
<line x1="532" y1="588.5" x2="537" y2="588.5" stroke="#707070" stroke-width="1"/>

</svg>
<svg class="abs" style="left:0;top:0" width="1026" height="770">
<defs><clipPath id="gc"><rect x="84" y="108" width="900.5" height="496"/></clipPath></defs>
<g clip-path="url(#gc)">
<path d="M84.0 242.7 L85.0 246.4 L86.0 250.3 L87.0 254.5 L88.0 258.9 L89.0 263.5 L90.0 268.3 L91.0 273.2 L92.0 278.3 L93.0 283.5 L94.0 288.7 L95.0 294.1 L96.0 299.4 L97.0 304.8 L98.0 310.3 L99.0 315.7 L100.0 321.2 L101.0 326.6 L102.0 332.1 L103.0 337.6 L104.0 343.0 L105.0 348.5 L106.0 354.0 L107.0 359.6 L108.0 365.2 L109.0 370.8 L110.0 376.5 L111.0 382.2 L112.0 388.0 L113.0 393.9 L114.0 399.7 L115.0 405.6 L116.0 411.6 L117.0 417.5 L118.0 423.3 L119.0 429.1 L120.0 434.7 L121.0 440.2 L122.0 445.5 L123.0 450.5 L124.0 455.2 L125.0 459.6 L126.0 463.5 L127.0 467.0 L128.0 470.0 L129.0 472.5 L130.0 474.4 L131.0 475.7 L132.0 476.4 L133.0 476.6 L134.0 476.1 L135.0 475.0 L136.0 473.3 L137.0 471.0 L138.0 468.3 L139.0 465.0 L140.0 461.2 L141.0 457.0 L142.0 452.4 L143.0 447.5 L144.0 442.4 L145.0 436.9 L146.0 431.4 L147.0 425.6 L148.0 419.8 L149.0 413.9 L150.0 408.0 L151.0 402.1 L152.0 396.2 L153.0 390.3 L154.0 384.5 L155.0 378.8 L156.0 373.1 L157.0 367.4 L158.0 361.8 L159.0 356.2 L160.0 350.7 L161.0 345.2 L162.0 339.7 L163.0 334.3 L164.0 328.8 L165.0 323.4 L166.0 317.9 L167.0 312.5 L168.0 307.0 L169.0 301.6 L170.0 296.2 L171.0 290.9 L172.0 285.6 L173.0 280.4 L174.0 275.2 L175.0 270.3 L176.0 265.4 L177.0 260.7 L178.0 256.2 L179.0 252.0 L180.0 247.9 L181.0 244.2 L182.0 240.7 L183.0 237.5 L184.0 234.6 L185.0 232.0 L186.0 229.8 L187.0 227.9 L188.0 226.4 L189.0 225.3 L190.0 224.5 L191.0 224.1 L192.0 224.1 L193.0 224.5 L194.0 225.3 L195.0 226.4 L196.0 227.9 L197.0 229.8 L198.0 232.0 L199.0 234.6 L200.0 237.5 L201.0 240.7 L202.0 244.2 L203.0 247.9 L204.0 252.0 L205.0 256.2 L206.0 260.7 L207.0 265.4 L208.0 270.3 L209.0 275.2 L210.0 280.4 L211.0 285.6 L212.0 290.9 L213.0 296.2 L214.0 301.6 L215.0 307.0 L216.0 312.5 L217.0 317.9 L218.0 323.4 L219.0 328.8 L220.0 334.3 L221.0 339.7 L222.0 345.2 L223.0 350.7 L224.0 356.2 L225.0 361.8 L226.0 367.4 L227.0 373.1 L228.0 378.8 L229.0 384.5 L230.0 390.3 L231.0 396.2 L232.0 402.1 L233.0 408.0 L234.0 413.9 L235.0 419.8 L236.0 425.6 L237.0 431.4 L238.0 436.9 L239.0 442.4 L240.0 447.5 L241.0 452.4 L242.0 457.0 L243.0 461.2 L244.0 465.0 L245.0 468.3 L246.0 471.0 L247.0 473.3 L248.0 475.0 L249.0 476.1 L250.0 476.6 L251.0 476.4 L252.0 475.7 L253.0 474.4 L254.0 472.5 L255.0 470.0 L256.0 467.0 L257.0 463.5 L258.0 459.6 L259.0 455.2 L260.0 450.5 L261.0 445.5 L262.0 440.2 L263.0 434.7 L264.0 429.1 L265.0 423.3 L266.0 417.5 L267.0 411.6 L268.0 405.6 L269.0 399.7 L270.0 393.9 L271.0 388.0 L272.0 382.2 L273.0 376.5 L274.0 370.8 L275.0 365.2 L276.0 359.6 L277.0 354.0 L278.0 348.5 L279.0 343.0 L280.0 337.6 L281.0 332.1 L282.0 326.6 L283.0 321.2 L284.0 315.7 L285.0 310.3 L286.0 304.8 L287.0 299.4 L288.0 294.1 L289.0 288.7 L290.0 283.5 L291.0 278.3 L292.0 273.2 L293.0 268.3 L294.0 263.5 L295.0 258.9 L296.0 254.5 L297.0 250.3 L298.0 246.4 L299.0 242.7 L300.0 239.3 L301.0 236.3 L302.0 233.5 L303.0 231.1 L304.0 229.0 L305.0 227.3 L306.0 225.9 L307.0 224.9 L308.0 224.3 L309.0 224.1 L310.0 224.3 L311.0 224.8 L312.0 225.7 L313.0 227.0 L314.0 228.6 L315.0 230.6 L316.0 233.0 L317.0 235.7 L318.0 238.7 L319.0 242.0 L320.0 245.6 L321.0 249.5 L322.0 253.7 L323.0 258.0 L324.0 262.6 L325.0 267.3 L326.0 272.2 L327.0 277.3 L328.0 282.4 L329.0 287.7 L330.0 293.0 L331.0 298.4 L332.0 303.8 L333.0 309.2 L334.0 314.6 L335.0 320.1 L336.0 325.5 L337.0 331.0 L338.0 336.5 L339.0 341.9 L340.0 347.4 L341.0 352.9 L342.0 358.5 L343.0 364.0 L344.0 369.7 L345.0 375.3 L346.0 381.1 L347.0 386.8 L348.0 392.7 L349.0 398.6 L350.0 404.5 L351.0 410.4 L352.0 416.3 L353.0 422.2 L354.0 427.9 L355.0 433.6 L356.0 439.1 L357.0 444.5 L358.0 449.5 L359.0 454.3 L360.0 458.7 L361.0 462.7 L362.0 466.3 L363.0 469.4 L364.0 472.0 L365.0 474.0 L366.0 475.5 L367.0 476.4 L368.0 476.6 L369.0 476.2 L370.0 475.3 L371.0 473.7 L372.0 471.5 L373.0 468.9 L374.0 465.6 L375.0 462.0 L376.0 457.9 L377.0 453.4 L378.0 448.5 L379.0 443.4 L380.0 438.0 L381.0 432.5 L382.0 426.8 L383.0 421.0 L384.0 415.1 L385.0 409.2 L386.0 403.3 L387.0 397.4 L388.0 391.5 L389.0 385.7 L390.0 379.9 L391.0 374.2 L392.0 368.5 L393.0 362.9 L394.0 357.4 L395.0 351.8 L396.0 346.3 L397.0 340.8 L398.0 335.4 L399.0 329.9 L400.0 324.5 L401.0 319.0 L402.0 313.5 L403.0 308.1 L404.0 302.7 L405.0 297.3 L406.0 291.9 L407.0 286.6 L408.0 281.4 L409.0 276.3 L410.0 271.2 L411.0 266.4 L412.0 261.7 L413.0 257.1 L414.0 252.8 L415.0 248.7 L416.0 244.9 L417.0 241.3 L418.0 238.1 L419.0 235.1 L420.0 232.5 L421.0 230.2 L422.0 228.3 L423.0 226.7 L424.0 225.5 L425.0 224.6 L426.0 224.2 L427.0 224.1 L428.0 224.4 L429.0 225.1 L430.0 226.2 L431.0 227.6 L432.0 229.4 L433.0 231.5 L434.0 234.0 L435.0 236.9 L436.0 240.0 L437.0 243.4 L438.0 247.2 L439.0 251.1 L440.0 255.4 L441.0 259.8 L442.0 264.5 L443.0 269.3 L444.0 274.2 L445.0 279.3 L446.0 284.5 L447.0 289.8 L448.0 295.1 L449.0 300.5 L450.0 305.9 L451.0 311.4 L452.0 316.8 L453.0 322.3 L454.0 327.7 L455.0 333.2 L456.0 338.6 L457.0 344.1 L458.0 349.6 L459.0 355.1 L460.0 360.7 L461.0 366.3 L462.0 371.9 L463.0 377.6 L464.0 383.4 L465.0 389.2 L466.0 395.0 L467.0 400.9 L468.0 406.8 L469.0 412.7 L470.0 418.6 L471.0 424.5 L472.0 430.2 L473.0 435.8 L474.0 441.3 L475.0 446.5 L476.0 451.5 L477.0 456.1 L478.0 460.4 L479.0 464.2 L480.0 467.6 L481.0 470.5 L482.0 472.9 L483.0 474.7 L484.0 475.9 L485.0 476.5 L486.0 476.5 L487.0 475.9 L488.0 474.7 L489.0 472.9 L490.0 470.5 L491.0 467.6 L492.0 464.2 L493.0 460.4 L494.0 456.1 L495.0 451.5 L496.0 446.5 L497.0 441.3 L498.0 435.8 L499.0 430.2 L500.0 424.5 L501.0 418.6 L502.0 412.7 L503.0 406.8 L504.0 400.9 L505.0 395.0 L506.0 389.2 L507.0 383.4 L508.0 377.6 L509.0 371.9 L510.0 366.3 L511.0 360.7 L512.0 355.1 L513.0 349.6 L514.0 344.1 L515.0 338.6 L516.0 333.2 L517.0 327.7 L518.0 322.3 L519.0 316.8 L520.0 311.4 L521.0 305.9 L522.0 300.5 L523.0 295.1 L524.0 289.8 L525.0 284.5 L526.0 279.3 L527.0 274.2 L528.0 269.3 L529.0 264.5 L530.0 259.8 L531.0 255.4 L532.0 251.1 L533.0 247.2 L534.0 243.4 L535.0 240.0 L536.0 236.9 L537.0 234.0 L538.0 231.5 L539.0 229.4 L540.0 227.6 L541.0 226.2 L542.0 225.1 L543.0 224.4 L544.0 224.1 L545.0 224.2 L546.0 224.6 L547.0 225.5 L548.0 226.7 L549.0 228.3 L550.0 230.2 L551.0 232.5 L552.0 235.1 L553.0 238.1 L554.0 241.3 L555.0 244.9 L556.0 248.7 L557.0 252.8 L558.0 257.1 L559.0 261.7 L560.0 266.4 L561.0 271.2 L562.0 276.3 L563.0 281.4 L564.0 286.6 L565.0 291.9 L566.0 297.3 L567.0 302.7 L568.0 308.1 L569.0 313.5 L570.0 319.0 L571.0 324.5 L572.0 329.9 L573.0 335.4 L574.0 340.8 L575.0 346.3 L576.0 351.8 L577.0 357.4 L578.0 362.9 L579.0 368.5 L580.0 374.2 L581.0 379.9 L582.0 385.7 L583.0 391.5 L584.0 397.4 L585.0 403.3 L586.0 409.2 L587.0 415.1 L588.0 421.0 L589.0 426.8 L590.0 432.5 L591.0 438.0 L592.0 443.4 L593.0 448.5 L594.0 453.4 L595.0 457.9 L596.0 462.0 L597.0 465.6 L598.0 468.9 L599.0 471.5 L600.0 473.7 L601.0 475.3 L602.0 476.2 L603.0 476.6 L604.0 476.4 L605.0 475.5 L606.0 474.0 L607.0 472.0 L608.0 469.4 L609.0 466.3 L610.0 462.7 L611.0 458.7 L612.0 454.3 L613.0 449.5 L614.0 444.5 L615.0 439.1 L616.0 433.6 L617.0 427.9 L618.0 422.2 L619.0 416.3 L620.0 410.4 L621.0 404.5 L622.0 398.6 L623.0 392.7 L624.0 386.8 L625.0 381.1 L626.0 375.3 L627.0 369.7 L628.0 364.0 L629.0 358.5 L630.0 352.9 L631.0 347.4 L632.0 341.9 L633.0 336.5 L634.0 331.0 L635.0 325.5 L636.0 320.1 L637.0 314.6 L638.0 309.2 L639.0 303.8 L640.0 298.4 L641.0 293.0 L642.0 287.7 L643.0 282.4 L644.0 277.3 L645.0 272.2 L646.0 267.3 L647.0 262.6 L648.0 258.0 L649.0 253.7 L650.0 249.5 L651.0 245.6 L652.0 242.0 L653.0 238.7 L654.0 235.7 L655.0 233.0 L656.0 230.6 L657.0 228.6 L658.0 227.0 L659.0 225.7 L660.0 224.8 L661.0 224.3 L662.0 224.1 L663.0 224.3 L664.0 224.9 L665.0 225.9 L666.0 227.3 L667.0 229.0 L668.0 231.1 L669.0 233.5 L670.0 236.3 L671.0 239.3 L672.0 242.7 L673.0 246.4 L674.0 250.3 L675.0 254.5 L676.0 258.9 L677.0 263.5 L678.0 268.3 L679.0 273.2 L680.0 278.3 L681.0 283.5 L682.0 288.7 L683.0 294.1 L684.0 299.4 L685.0 304.8 L686.0 310.3 L687.0 315.7 L688.0 321.2 L689.0 326.6 L690.0 332.1 L691.0 337.6 L692.0 343.0 L693.0 348.5 L694.0 354.0 L695.0 359.6 L696.0 365.2 L697.0 370.8 L698.0 376.5 L699.0 382.2 L700.0 388.0 L701.0 393.9 L702.0 399.7 L703.0 405.6 L704.0 411.6 L705.0 417.5 L706.0 423.3 L707.0 429.1 L708.0 434.7 L709.0 440.2 L710.0 445.5 L711.0 450.5 L712.0 455.2 L713.0 459.6 L714.0 463.5 L715.0 467.0 L716.0 470.0 L717.0 472.5 L718.0 474.4 L719.0 475.7 L720.0 476.4 L721.0 476.6 L722.0 476.1 L723.0 475.0 L724.0 473.3 L725.0 471.0 L726.0 468.3 L727.0 465.0 L728.0 461.2 L729.0 457.0 L730.0 452.4 L731.0 447.5 L732.0 442.4 L733.0 436.9 L734.0 431.4 L735.0 425.6 L736.0 419.8 L737.0 413.9 L738.0 408.0 L739.0 402.1 L740.0 396.2 L741.0 390.3 L742.0 384.5 L743.0 378.8 L744.0 373.1 L745.0 367.4 L746.0 361.8 L747.0 356.2 L748.0 350.7 L749.0 345.2 L750.0 339.7 L751.0 334.3 L752.0 328.8 L753.0 323.4 L754.0 317.9 L755.0 312.5 L756.0 307.0 L757.0 301.6 L758.0 296.2 L759.0 290.9 L760.0 285.6 L761.0 280.4 L762.0 275.2 L763.0 270.3 L764.0 265.4 L765.0 260.7 L766.0 256.2 L767.0 252.0 L768.0 247.9 L769.0 244.2 L770.0 240.7 L771.0 237.5 L772.0 234.6 L773.0 232.0 L774.0 229.8 L775.0 227.9 L776.0 226.4 L777.0 225.3 L778.0 224.5 L779.0 224.1 L780.0 224.1 L781.0 224.5 L782.0 225.3 L783.0 226.4 L784.0 227.9 L785.0 229.8 L786.0 232.0 L787.0 234.6 L788.0 237.5 L789.0 240.7 L790.0 244.2 L791.0 247.9 L792.0 252.0 L793.0 256.2 L794.0 260.7 L795.0 265.4 L796.0 270.3 L797.0 275.2 L798.0 280.4 L799.0 285.6 L800.0 290.9 L801.0 296.2 L802.0 301.6 L803.0 307.0 L804.0 312.5 L805.0 317.9 L806.0 323.4 L807.0 328.8 L808.0 334.3 L809.0 339.7 L810.0 345.2 L811.0 350.7 L812.0 356.2 L813.0 361.8 L814.0 367.4 L815.0 373.1 L816.0 378.8 L817.0 384.5 L818.0 390.3 L819.0 396.2 L820.0 402.1 L821.0 408.0 L822.0 413.9 L823.0 419.8 L824.0 425.6 L825.0 431.4 L826.0 436.9 L827.0 442.4 L828.0 447.5 L829.0 452.4 L830.0 457.0 L831.0 461.2 L832.0 465.0 L833.0 468.3 L834.0 471.0 L835.0 473.3 L836.0 475.0 L837.0 476.1 L838.0 476.6 L839.0 476.4 L840.0 475.7 L841.0 474.4 L842.0 472.5 L843.0 470.0 L844.0 467.0 L845.0 463.5 L846.0 459.6 L847.0 455.2 L848.0 450.5 L849.0 445.5 L850.0 440.2 L851.0 434.7 L852.0 429.1 L853.0 423.3 L854.0 417.5 L855.0 411.6 L856.0 405.6 L857.0 399.7 L858.0 393.9 L859.0 388.0 L860.0 382.2 L861.0 376.5 L862.0 370.8 L863.0 365.2 L864.0 359.6 L865.0 354.0 L866.0 348.5 L867.0 343.0 L868.0 337.6 L869.0 332.1 L870.0 326.6 L871.0 321.2 L872.0 315.7 L873.0 310.3 L874.0 304.8 L875.0 299.4 L876.0 294.1 L877.0 288.7 L878.0 283.5 L879.0 278.3 L880.0 273.2 L881.0 268.3 L882.0 263.5 L883.0 258.9 L884.0 254.5 L885.0 250.3 L886.0 246.4 L887.0 242.7 L888.0 239.3 L889.0 236.3 L890.0 233.5 L891.0 231.1 L892.0 229.0 L893.0 227.3 L894.0 225.9 L895.0 224.9 L896.0 224.3 L897.0 224.1 L898.0 224.3 L899.0 224.8 L900.0 225.7 L901.0 227.0 L902.0 228.6 L903.0 230.6 L904.0 233.0 L905.0 235.7 L906.0 238.7 L907.0 242.0 L908.0 245.6 L909.0 249.5 L910.0 253.7 L911.0 258.0 L912.0 262.6 L913.0 267.3 L914.0 272.2 L915.0 277.3 L916.0 282.4 L917.0 287.7 L918.0 293.0 L919.0 298.4 L920.0 303.8 L921.0 309.2 L922.0 314.6 L923.0 320.1 L924.0 325.5 L925.0 331.0 L926.0 336.5 L927.0 341.9 L928.0 347.4 L929.0 352.9 L930.0 358.5 L931.0 364.0 L932.0 369.7 L933.0 375.3 L934.0 381.1 L935.0 386.8 L936.0 392.7 L937.0 398.6 L938.0 404.5 L939.0 410.4 L940.0 416.3 L941.0 422.2 L942.0 427.9 L943.0 433.6 L944.0 439.1 L945.0 444.5 L946.0 449.5 L947.0 454.3 L948.0 458.7 L949.0 462.7 L950.0 466.3 L951.0 469.4 L952.0 472.0 L953.0 474.0 L954.0 475.5 L955.0 476.4 L956.0 476.6 L957.0 476.2 L958.0 475.3 L959.0 473.7 L960.0 471.5 L961.0 468.9 L962.0 465.6 L963.0 462.0 L964.0 457.9 L965.0 453.4 L966.0 448.5 L967.0 443.4 L968.0 438.0 L969.0 432.5 L970.0 426.8 L971.0 421.0 L972.0 415.1 L973.0 409.2 L974.0 403.3 L975.0 397.4 L976.0 391.5 L977.0 385.7 L978.0 379.9 L979.0 374.2 L980.0 368.5 L981.0 362.9 L982.0 357.4 L983.0 351.8 L984.0 346.3" fill="none" stroke="#1d52b8" stroke-width="1.9" stroke-linejoin="round"/>
<path d="M84.0 250.5 L85.0 254.2 L86.0 258.1 L87.0 262.3 L88.0 266.7 L89.0 271.3 L90.0 276.1 L91.0 281.0 L92.0 286.1 L93.0 291.3 L94.0 296.5 L95.0 301.9 L96.0 307.2 L97.0 312.6 L98.0 318.1 L99.0 323.5 L100.0 329.0 L101.0 334.4 L102.0 339.9 L103.0 345.4 L104.0 350.8 L105.0 356.3 L106.0 361.8 L107.0 367.4 L108.0 373.0 L109.0 378.6 L110.0 384.3 L111.0 390.0 L112.0 395.8 L113.0 401.7 L114.0 407.5 L115.0 413.4 L116.0 419.4 L117.0 425.3 L118.0 431.1 L119.0 436.9 L120.0 442.5 L121.0 448.0 L122.0 453.3 L123.0 458.3 L124.0 463.0 L125.0 467.4 L126.0 471.3 L127.0 474.8 L128.0 477.8 L129.0 480.3 L130.0 482.2 L131.0 483.5 L132.0 484.2 L133.0 484.4 L134.0 483.9 L135.0 482.8 L136.0 481.1 L137.0 478.8 L138.0 476.1 L139.0 472.8 L140.0 469.0 L141.0 464.8 L142.0 460.2 L143.0 455.3 L144.0 450.2 L145.0 444.7 L146.0 439.2 L147.0 433.4 L148.0 427.6 L149.0 421.7 L150.0 415.8 L151.0 409.9 L152.0 404.0 L153.0 398.1 L154.0 392.3 L155.0 386.6 L156.0 380.9 L157.0 375.2 L158.0 369.6 L159.0 364.0 L160.0 358.5 L161.0 353.0 L162.0 347.5 L163.0 342.1 L164.0 336.6 L165.0 331.2 L166.0 325.7 L167.0 320.3 L168.0 314.8 L169.0 309.4 L170.0 304.0 L171.0 298.7 L172.0 293.4 L173.0 288.2 L174.0 283.0 L175.0 278.1 L176.0 273.2 L177.0 268.5 L178.0 264.0 L179.0 259.8 L180.0 255.7 L181.0 252.0 L182.0 248.5 L183.0 245.3 L184.0 242.4 L185.0 239.8 L186.0 237.6 L187.0 235.7 L188.0 234.2 L189.0 233.1 L190.0 232.3 L191.0 231.9 L192.0 231.9 L193.0 232.3 L194.0 233.1 L195.0 234.2 L196.0 235.7 L197.0 237.6 L198.0 239.8 L199.0 242.4 L200.0 245.3 L201.0 248.5 L202.0 252.0 L203.0 255.7 L204.0 259.8 L205.0 264.0 L206.0 268.5 L207.0 273.2 L208.0 278.1 L209.0 283.0 L210.0 288.2 L211.0 293.4 L212.0 298.7 L213.0 304.0 L214.0 309.4 L215.0 314.8 L216.0 320.3 L217.0 325.7 L218.0 331.2 L219.0 336.6 L220.0 342.1 L221.0 347.5 L222.0 353.0 L223.0 358.5 L224.0 364.0 L225.0 369.6 L226.0 375.2 L227.0 380.9 L228.0 386.6 L229.0 392.3 L230.0 398.1 L231.0 404.0 L232.0 409.9 L233.0 415.8 L234.0 421.7 L235.0 427.6 L236.0 433.4 L237.0 439.2 L238.0 444.7 L239.0 450.2 L240.0 455.3 L241.0 460.2 L242.0 464.8 L243.0 469.0 L244.0 472.8 L245.0 476.1 L246.0 478.8 L247.0 481.1 L248.0 482.8 L249.0 483.9 L250.0 484.4 L251.0 484.2 L252.0 483.5 L253.0 482.2 L254.0 480.3 L255.0 477.8 L256.0 474.8 L257.0 471.3 L258.0 467.4 L259.0 463.0 L260.0 458.3 L261.0 453.3 L262.0 448.0 L263.0 442.5 L264.0 436.9 L265.0 431.1 L266.0 425.3 L267.0 419.4 L268.0 413.4 L269.0 407.5 L270.0 401.7 L271.0 395.8 L272.0 390.0 L273.0 384.3 L274.0 378.6 L275.0 373.0 L276.0 367.4 L277.0 361.8 L278.0 356.3 L279.0 350.8 L280.0 345.4 L281.0 339.9 L282.0 334.4 L283.0 329.0 L284.0 323.5 L285.0 318.1 L286.0 312.6 L287.0 307.2 L288.0 301.9 L289.0 296.5 L290.0 291.3 L291.0 286.1 L292.0 281.0 L293.0 276.1 L294.0 271.3 L295.0 266.7 L296.0 262.3 L297.0 258.1 L298.0 254.2 L299.0 250.5 L300.0 247.1 L301.0 244.1 L302.0 241.3 L303.0 238.9 L304.0 236.8 L305.0 235.1 L306.0 233.7 L307.0 232.7 L308.0 232.1 L309.0 231.9 L310.0 232.1 L311.0 232.6 L312.0 233.5 L313.0 234.8 L314.0 236.4 L315.0 238.4 L316.0 240.8 L317.0 243.5 L318.0 246.5 L319.0 249.8 L320.0 253.4 L321.0 257.3 L322.0 261.5 L323.0 265.8 L324.0 270.4 L325.0 275.1 L326.0 280.0 L327.0 285.1 L328.0 290.2 L329.0 295.5 L330.0 300.8 L331.0 306.2 L332.0 311.6 L333.0 317.0 L334.0 322.4 L335.0 327.9 L336.0 333.3 L337.0 338.8 L338.0 344.3 L339.0 349.7 L340.0 355.2 L341.0 360.7 L342.0 366.3 L343.0 371.8 L344.0 377.5 L345.0 383.1 L346.0 388.9 L347.0 394.6 L348.0 400.5 L349.0 406.4 L350.0 412.3 L351.0 418.2 L352.0 424.1 L353.0 430.0 L354.0 435.7 L355.0 441.4 L356.0 446.9 L357.0 452.3 L358.0 457.3 L359.0 462.1 L360.0 466.5 L361.0 470.5 L362.0 474.1 L363.0 477.2 L364.0 479.8 L365.0 481.8 L366.0 483.3 L367.0 484.2 L368.0 484.4 L369.0 484.0 L370.0 483.1 L371.0 481.5 L372.0 479.3 L373.0 476.7 L374.0 473.4 L375.0 469.8 L376.0 465.7 L377.0 461.2 L378.0 456.3 L379.0 451.2 L380.0 445.8 L381.0 440.3 L382.0 434.6 L383.0 428.8 L384.0 422.9 L385.0 417.0 L386.0 411.1 L387.0 405.2 L388.0 399.3 L389.0 393.5 L390.0 387.7 L391.0 382.0 L392.0 376.3 L393.0 370.7 L394.0 365.2 L395.0 359.6 L396.0 354.1 L397.0 348.6 L398.0 343.2 L399.0 337.7 L400.0 332.3 L401.0 326.8 L402.0 321.3 L403.0 315.9 L404.0 310.5 L405.0 305.1 L406.0 299.7 L407.0 294.4 L408.0 289.2 L409.0 284.1 L410.0 279.0 L411.0 274.2 L412.0 269.5 L413.0 264.9 L414.0 260.6 L415.0 256.5 L416.0 252.7 L417.0 249.1 L418.0 245.9 L419.0 242.9 L420.0 240.3 L421.0 238.0 L422.0 236.1 L423.0 234.5 L424.0 233.3 L425.0 232.4 L426.0 232.0 L427.0 231.9 L428.0 232.2 L429.0 232.9 L430.0 234.0 L431.0 235.4 L432.0 237.2 L433.0 239.3 L434.0 241.8 L435.0 244.7 L436.0 247.8 L437.0 251.2 L438.0 255.0 L439.0 258.9 L440.0 263.2 L441.0 267.6 L442.0 272.3 L443.0 277.1 L444.0 282.0 L445.0 287.1 L446.0 292.3 L447.0 297.6 L448.0 302.9 L449.0 308.3 L450.0 313.7 L451.0 319.2 L452.0 324.6 L453.0 330.1 L454.0 335.5 L455.0 341.0 L456.0 346.4 L457.0 351.9 L458.0 357.4 L459.0 362.9 L460.0 368.5 L461.0 374.1 L462.0 379.7 L463.0 385.4 L464.0 391.2 L465.0 397.0 L466.0 402.8 L467.0 408.7 L468.0 414.6 L469.0 420.5 L470.0 426.4 L471.0 432.3 L472.0 438.0 L473.0 443.6 L474.0 449.1 L475.0 454.3 L476.0 459.3 L477.0 463.9 L478.0 468.2 L479.0 472.0 L480.0 475.4 L481.0 478.3 L482.0 480.7 L483.0 482.5 L484.0 483.7 L485.0 484.3 L486.0 484.3 L487.0 483.7 L488.0 482.5 L489.0 480.7 L490.0 478.3 L491.0 475.4 L492.0 472.0 L493.0 468.2 L494.0 463.9 L495.0 459.3 L496.0 454.3 L497.0 449.1 L498.0 443.6 L499.0 438.0 L500.0 432.3 L501.0 426.4 L502.0 420.5 L503.0 414.6 L504.0 408.7 L505.0 402.8 L506.0 397.0 L507.0 391.2 L508.0 385.4 L509.0 379.7 L510.0 374.1 L511.0 368.5 L512.0 362.9 L513.0 357.4 L514.0 351.9 L515.0 346.4 L516.0 341.0 L517.0 335.5 L518.0 330.1 L519.0 324.6 L520.0 319.2 L521.0 313.7 L522.0 308.3 L523.0 302.9 L524.0 297.6 L525.0 292.3 L526.0 287.1 L527.0 282.0 L528.0 277.1 L529.0 272.3 L530.0 267.6 L531.0 263.2 L532.0 258.9 L533.0 255.0 L534.0 251.2 L535.0 247.8 L536.0 244.7 L537.0 241.8 L538.0 239.3 L539.0 237.2 L540.0 235.4 L541.0 234.0 L542.0 232.9 L543.0 232.2 L544.0 231.9 L545.0 232.0 L546.0 232.4 L547.0 233.3 L548.0 234.5 L549.0 236.1 L550.0 238.0 L551.0 240.3 L552.0 242.9 L553.0 245.9 L554.0 249.1 L555.0 252.7 L556.0 256.5 L557.0 260.6 L558.0 264.9 L559.0 269.5 L560.0 274.2 L561.0 279.0 L562.0 284.1 L563.0 289.2 L564.0 294.4 L565.0 299.7 L566.0 305.1 L567.0 310.5 L568.0 315.9 L569.0 321.3 L570.0 326.8 L571.0 332.3 L572.0 337.7 L573.0 343.2 L574.0 348.6 L575.0 354.1 L576.0 359.6 L577.0 365.2 L578.0 370.7 L579.0 376.3 L580.0 382.0 L581.0 387.7 L582.0 393.5 L583.0 399.3 L584.0 405.2 L585.0 411.1 L586.0 417.0 L587.0 422.9 L588.0 428.8 L589.0 434.6 L590.0 440.3 L591.0 445.8 L592.0 451.2 L593.0 456.3 L594.0 461.2 L595.0 465.7 L596.0 469.8 L597.0 473.4 L598.0 476.7 L599.0 479.3 L600.0 481.5 L601.0 483.1 L602.0 484.0 L603.0 484.4 L604.0 484.2 L605.0 483.3 L606.0 481.8 L607.0 479.8 L608.0 477.2 L609.0 474.1 L610.0 470.5 L611.0 466.5 L612.0 462.1 L613.0 457.3 L614.0 452.3 L615.0 446.9 L616.0 441.4 L617.0 435.7 L618.0 430.0 L619.0 424.1 L620.0 418.2 L621.0 412.3 L622.0 406.4 L623.0 400.5 L624.0 394.6 L625.0 388.9 L626.0 383.1 L627.0 377.5 L628.0 371.8 L629.0 366.3 L630.0 360.7 L631.0 355.2 L632.0 349.7 L633.0 344.3 L634.0 338.8 L635.0 333.3 L636.0 327.9 L637.0 322.4 L638.0 317.0 L639.0 311.6 L640.0 306.2 L641.0 300.8 L642.0 295.5 L643.0 290.2 L644.0 285.1 L645.0 280.0 L646.0 275.1 L647.0 270.4 L648.0 265.8 L649.0 261.5 L650.0 257.3 L651.0 253.4 L652.0 249.8 L653.0 246.5 L654.0 243.5 L655.0 240.8 L656.0 238.4 L657.0 236.4 L658.0 234.8 L659.0 233.5 L660.0 232.6 L661.0 232.1 L662.0 231.9 L663.0 232.1 L664.0 232.7 L665.0 233.7 L666.0 235.1 L667.0 236.8 L668.0 238.9 L669.0 241.3 L670.0 244.1 L671.0 247.1 L672.0 250.5 L673.0 254.2 L674.0 258.1 L675.0 262.3 L676.0 266.7 L677.0 271.3 L678.0 276.1 L679.0 281.0 L680.0 286.1 L681.0 291.3 L682.0 296.5 L683.0 301.9 L684.0 307.2 L685.0 312.6 L686.0 318.1 L687.0 323.5 L688.0 329.0 L689.0 334.4 L690.0 339.9 L691.0 345.4 L692.0 350.8 L693.0 356.3 L694.0 361.8 L695.0 367.4 L696.0 373.0 L697.0 378.6 L698.0 384.3 L699.0 390.0 L700.0 395.8 L701.0 401.7 L702.0 407.5 L703.0 413.4 L704.0 419.4 L705.0 425.3 L706.0 431.1 L707.0 436.9 L708.0 442.5 L709.0 448.0 L710.0 453.3 L711.0 458.3 L712.0 463.0 L713.0 467.4 L714.0 471.3 L715.0 474.8 L716.0 477.8 L717.0 480.3 L718.0 482.2 L719.0 483.5 L720.0 484.2 L721.0 484.4 L722.0 483.9 L723.0 482.8 L724.0 481.1 L725.0 478.8 L726.0 476.1 L727.0 472.8 L728.0 469.0 L729.0 464.8 L730.0 460.2 L731.0 455.3 L732.0 450.2 L733.0 444.7 L734.0 439.2 L735.0 433.4 L736.0 427.6 L737.0 421.7 L738.0 415.8 L739.0 409.9 L740.0 404.0 L741.0 398.1 L742.0 392.3 L743.0 386.6 L744.0 380.9 L745.0 375.2 L746.0 369.6 L747.0 364.0 L748.0 358.5 L749.0 353.0 L750.0 347.5 L751.0 342.1 L752.0 336.6 L753.0 331.2 L754.0 325.7 L755.0 320.3 L756.0 314.8 L757.0 309.4 L758.0 304.0 L759.0 298.7 L760.0 293.4 L761.0 288.2 L762.0 283.0 L763.0 278.1 L764.0 273.2 L765.0 268.5 L766.0 264.0 L767.0 259.8 L768.0 255.7 L769.0 252.0 L770.0 248.5 L771.0 245.3 L772.0 242.4 L773.0 239.8 L774.0 237.6 L775.0 235.7 L776.0 234.2 L777.0 233.1 L778.0 232.3 L779.0 231.9 L780.0 231.9 L781.0 232.3 L782.0 233.1 L783.0 234.2 L784.0 235.7 L785.0 237.6 L786.0 239.8 L787.0 242.4 L788.0 245.3 L789.0 248.5 L790.0 252.0 L791.0 255.7 L792.0 259.8 L793.0 264.0 L794.0 268.5 L795.0 273.2 L796.0 278.1 L797.0 283.0 L798.0 288.2 L799.0 293.4 L800.0 298.7 L801.0 304.0 L802.0 309.4 L803.0 314.8 L804.0 320.3 L805.0 325.7 L806.0 331.2 L807.0 336.6 L808.0 342.1 L809.0 347.5 L810.0 353.0 L811.0 358.5 L812.0 364.0 L813.0 369.6 L814.0 375.2 L815.0 380.9 L816.0 386.6 L817.0 392.3 L818.0 398.1 L819.0 404.0 L820.0 409.9 L821.0 415.8 L822.0 421.7 L823.0 427.6 L824.0 433.4 L825.0 439.2 L826.0 444.7 L827.0 450.2 L828.0 455.3 L829.0 460.2 L830.0 464.8 L831.0 469.0 L832.0 472.8 L833.0 476.1 L834.0 478.8 L835.0 481.1 L836.0 482.8 L837.0 483.9 L838.0 484.4 L839.0 484.2 L840.0 483.5 L841.0 482.2 L842.0 480.3 L843.0 477.8 L844.0 474.8 L845.0 471.3 L846.0 467.4 L847.0 463.0 L848.0 458.3 L849.0 453.3 L850.0 448.0 L851.0 442.5 L852.0 436.9 L853.0 431.1 L854.0 425.3 L855.0 419.4 L856.0 413.4 L857.0 407.5 L858.0 401.7 L859.0 395.8 L860.0 390.0 L861.0 384.3 L862.0 378.6 L863.0 373.0 L864.0 367.4 L865.0 361.8 L866.0 356.3 L867.0 350.8 L868.0 345.4 L869.0 339.9 L870.0 334.4 L871.0 329.0 L872.0 323.5 L873.0 318.1 L874.0 312.6 L875.0 307.2 L876.0 301.9 L877.0 296.5 L878.0 291.3 L879.0 286.1 L880.0 281.0 L881.0 276.1 L882.0 271.3 L883.0 266.7 L884.0 262.3 L885.0 258.1 L886.0 254.2 L887.0 250.5 L888.0 247.1 L889.0 244.1 L890.0 241.3 L891.0 238.9 L892.0 236.8 L893.0 235.1 L894.0 233.7 L895.0 232.7 L896.0 232.1 L897.0 231.9 L898.0 232.1 L899.0 232.6 L900.0 233.5 L901.0 234.8 L902.0 236.4 L903.0 238.4 L904.0 240.8 L905.0 243.5 L906.0 246.5 L907.0 249.8 L908.0 253.4 L909.0 257.3 L910.0 261.5 L911.0 265.8 L912.0 270.4 L913.0 275.1 L914.0 280.0 L915.0 285.1 L916.0 290.2 L917.0 295.5 L918.0 300.8 L919.0 306.2 L920.0 311.6 L921.0 317.0 L922.0 322.4 L923.0 327.9 L924.0 333.3 L925.0 338.8 L926.0 344.3 L927.0 349.7 L928.0 355.2 L929.0 360.7 L930.0 366.3 L931.0 371.8 L932.0 377.5 L933.0 383.1 L934.0 388.9 L935.0 394.6 L936.0 400.5 L937.0 406.4 L938.0 412.3 L939.0 418.2 L940.0 424.1 L941.0 430.0 L942.0 435.7 L943.0 441.4 L944.0 446.9 L945.0 452.3 L946.0 457.3 L947.0 462.1 L948.0 466.5 L949.0 470.5 L950.0 474.1 L951.0 477.2 L952.0 479.8 L953.0 481.8 L954.0 483.3 L955.0 484.2 L956.0 484.4 L957.0 484.0 L958.0 483.1 L959.0 481.5 L960.0 479.3 L961.0 476.7 L962.0 473.4 L963.0 469.8 L964.0 465.7 L965.0 461.2 L966.0 456.3 L967.0 451.2 L968.0 445.8 L969.0 440.3 L970.0 434.6 L971.0 428.8 L972.0 422.9 L973.0 417.0 L974.0 411.1 L975.0 405.2 L976.0 399.3 L977.0 393.5 L978.0 387.7 L979.0 382.0 L980.0 376.3 L981.0 370.7 L982.0 365.2 L983.0 359.6 L984.0 354.1" fill="none" stroke="#1d52b8" stroke-width="1.9" stroke-linejoin="round"/>
<path d="M84.0 244.0 L85.0 247.7 L86.0 251.6 L87.0 255.8 L88.0 260.2 L89.0 264.8 L90.0 269.6 L91.0 274.5 L92.0 279.6 L93.0 284.8 L94.0 290.0 L95.0 295.4 L96.0 300.7 L97.0 306.1 L98.0 311.6 L99.0 317.0 L100.0 322.5 L101.0 327.9 L102.0 333.4 L103.0 338.9 L104.0 344.3 L105.0 349.8 L106.0 355.3 L107.0 360.9 L108.0 366.5 L109.0 372.1 L110.0 377.8 L111.0 383.5 L112.0 389.3 L113.0 395.2 L114.0 401.0 L115.0 406.9 L116.0 412.9 L117.0 418.8 L118.0 424.6 L119.0 430.4 L120.0 436.0 L121.0 441.5 L122.0 446.8 L123.0 451.8 L124.0 456.5 L125.0 460.9 L126.0 464.8 L127.0 468.3 L128.0 471.3 L129.0 473.8 L130.0 475.7 L131.0 477.0 L132.0 477.7 L133.0 477.9 L134.0 477.4 L135.0 476.3 L136.0 474.6 L137.0 472.3 L138.0 469.6 L139.0 466.3 L140.0 462.5 L141.0 458.3 L142.0 453.7 L143.0 448.8 L144.0 443.7 L145.0 438.2 L146.0 432.7 L147.0 426.9 L148.0 421.1 L149.0 415.2 L150.0 409.3 L151.0 403.4 L152.0 397.5 L153.0 391.6 L154.0 385.8 L155.0 380.1 L156.0 374.4 L157.0 368.7 L158.0 363.1 L159.0 357.5 L160.0 352.0 L161.0 346.5 L162.0 341.0 L163.0 335.6 L164.0 330.1 L165.0 324.7 L166.0 319.2 L167.0 313.8 L168.0 308.3 L169.0 302.9 L170.0 297.5 L171.0 292.2 L172.0 286.9 L173.0 281.7 L174.0 276.5 L175.0 271.6 L176.0 266.7 L177.0 262.0 L178.0 257.5 L179.0 253.3 L180.0 249.2 L181.0 245.5 L182.0 242.0 L183.0 238.8 L184.0 235.9 L185.0 233.3 L186.0 231.1 L187.0 229.2 L188.0 227.7 L189.0 226.6 L190.0 225.8 L191.0 225.4 L192.0 225.4 L193.0 225.8 L194.0 226.6 L195.0 227.7 L196.0 229.2 L197.0 231.1 L198.0 233.3 L199.0 235.9 L200.0 238.8 L201.0 242.0 L202.0 245.5 L203.0 249.2 L204.0 253.3 L205.0 257.5 L206.0 262.0 L207.0 266.7 L208.0 271.6 L209.0 276.5 L210.0 281.7 L211.0 286.9 L212.0 292.2 L213.0 297.5 L214.0 302.9 L215.0 308.3 L216.0 313.8 L217.0 319.2 L218.0 324.7 L219.0 330.1 L220.0 335.6 L221.0 341.0 L222.0 346.5 L223.0 352.0 L224.0 357.5 L225.0 363.1 L226.0 368.7 L227.0 374.4 L228.0 380.1 L229.0 385.8 L230.0 391.6 L231.0 397.5 L232.0 403.4 L233.0 409.3 L234.0 415.2 L235.0 421.1 L236.0 426.9 L237.0 432.7 L238.0 438.2 L239.0 443.7 L240.0 448.8 L241.0 453.7 L242.0 458.3 L243.0 462.5 L244.0 466.3 L245.0 469.6 L246.0 472.3 L247.0 474.6 L248.0 476.3 L249.0 477.4 L250.0 477.9 L251.0 477.7 L252.0 477.0 L253.0 475.7 L254.0 473.8 L255.0 471.3 L256.0 468.3 L257.0 464.8 L258.0 460.9 L259.0 456.5 L260.0 451.8 L261.0 446.8 L262.0 441.5 L263.0 436.0 L264.0 430.4 L265.0 424.6 L266.0 418.8 L267.0 412.9 L268.0 406.9 L269.0 401.0 L270.0 395.2 L271.0 389.3 L272.0 383.5 L273.0 377.8 L274.0 372.1 L275.0 366.5 L276.0 360.9 L277.0 355.3 L278.0 349.8 L279.0 344.3 L280.0 338.9 L281.0 333.4 L282.0 327.9 L283.0 322.5 L284.0 317.0 L285.0 311.6 L286.0 306.1 L287.0 300.7 L288.0 295.4 L289.0 290.0 L290.0 284.8 L291.0 279.6 L292.0 274.5 L293.0 269.6 L294.0 264.8 L295.0 260.2 L296.0 255.8 L297.0 251.6 L298.0 247.7 L299.0 244.0 L300.0 240.6 L301.0 237.6 L302.0 234.8 L303.0 232.4 L304.0 230.3 L305.0 228.6 L306.0 227.2 L307.0 226.2 L308.0 225.6 L309.0 225.4 L310.0 225.6 L311.0 226.1 L312.0 227.0 L313.0 228.3 L314.0 229.9 L315.0 231.9 L316.0 234.3 L317.0 237.0 L318.0 240.0 L319.0 243.3 L320.0 246.9 L321.0 250.8 L322.0 255.0 L323.0 259.3 L324.0 263.9 L325.0 268.6 L326.0 273.5 L327.0 278.6 L328.0 283.7 L329.0 289.0 L330.0 294.3 L331.0 299.7 L332.0 305.1 L333.0 310.5 L334.0 315.9 L335.0 321.4 L336.0 326.8 L337.0 332.3 L338.0 337.8 L339.0 343.2 L340.0 348.7 L341.0 354.2 L342.0 359.8 L343.0 365.3 L344.0 371.0 L345.0 376.6 L346.0 382.4 L347.0 388.1 L348.0 394.0 L349.0 399.9 L350.0 405.8 L351.0 411.7 L352.0 417.6 L353.0 423.5 L354.0 429.2 L355.0 434.9 L356.0 440.4 L357.0 445.8 L358.0 450.8 L359.0 455.6 L360.0 460.0 L361.0 464.0 L362.0 467.6 L363.0 470.7 L364.0 473.3 L365.0 475.3 L366.0 476.8 L367.0 477.7 L368.0 477.9 L369.0 477.5 L370.0 476.6 L371.0 475.0 L372.0 472.8 L373.0 470.2 L374.0 466.9 L375.0 463.3 L376.0 459.2 L377.0 454.7 L378.0 449.8 L379.0 444.7 L380.0 439.3 L381.0 433.8 L382.0 428.1 L383.0 422.3 L384.0 416.4 L385.0 410.5 L386.0 404.6 L387.0 398.7 L388.0 392.8 L389.0 387.0 L390.0 381.2 L391.0 375.5 L392.0 369.8 L393.0 364.2 L394.0 358.7 L395.0 353.1 L396.0 347.6 L397.0 342.1 L398.0 336.7 L399.0 331.2 L400.0 325.8 L401.0 320.3 L402.0 314.8 L403.0 309.4 L404.0 304.0 L405.0 298.6 L406.0 293.2 L407.0 287.9 L408.0 282.7 L409.0 277.6 L410.0 272.5 L411.0 267.7 L412.0 263.0 L413.0 258.4 L414.0 254.1 L415.0 250.0 L416.0 246.2 L417.0 242.6 L418.0 239.4 L419.0 236.4 L420.0 233.8 L421.0 231.5 L422.0 229.6 L423.0 228.0 L424.0 226.8 L425.0 225.9 L426.0 225.5 L427.0 225.4 L428.0 225.7 L429.0 226.4 L430.0 227.5 L431.0 228.9 L432.0 230.7 L433.0 232.8 L434.0 235.3 L435.0 238.2 L436.0 241.3 L437.0 244.7 L438.0 248.5 L439.0 252.4 L440.0 256.7 L441.0 261.1 L442.0 265.8 L443.0 270.6 L444.0 275.5 L445.0 280.6 L446.0 285.8 L447.0 291.1 L448.0 296.4 L449.0 301.8 L450.0 307.2 L451.0 312.7 L452.0 318.1 L453.0 323.6 L454.0 329.0 L455.0 334.5 L456.0 339.9 L457.0 345.4 L458.0 350.9 L459.0 356.4 L460.0 362.0 L461.0 367.6 L462.0 373.2 L463.0 378.9 L464.0 384.7 L465.0 390.5 L466.0 396.3 L467.0 402.2 L468.0 408.1 L469.0 414.0 L470.0 419.9 L471.0 425.8 L472.0 431.5 L473.0 437.1 L474.0 442.6 L475.0 447.8 L476.0 452.8 L477.0 457.4 L478.0 461.7 L479.0 465.5 L480.0 468.9 L481.0 471.8 L482.0 474.2 L483.0 476.0 L484.0 477.2 L485.0 477.8 L486.0 477.8 L487.0 477.2 L488.0 476.0 L489.0 474.2 L490.0 471.8 L491.0 468.9 L492.0 465.5 L493.0 461.7 L494.0 457.4 L495.0 452.8 L496.0 447.8 L497.0 442.6 L498.0 437.1 L499.0 431.5 L500.0 425.8 L501.0 419.9 L502.0 414.0 L503.0 408.1 L504.0 402.2 L505.0 396.3 L506.0 390.5 L507.0 384.7 L508.0 378.9 L509.0 373.2 L510.0 367.6 L511.0 362.0 L512.0 356.4 L513.0 350.9 L514.0 345.4 L515.0 339.9 L516.0 334.5 L517.0 329.0 L518.0 323.6 L519.0 318.1 L520.0 312.7 L521.0 307.2 L522.0 301.8 L523.0 296.4 L524.0 291.1 L525.0 285.8 L526.0 280.6 L527.0 275.5 L528.0 270.6 L529.0 265.8 L530.0 261.1 L531.0 256.7 L532.0 252.4 L533.0 248.5 L534.0 244.7 L535.0 241.3 L536.0 238.2 L537.0 235.3 L538.0 232.8 L539.0 230.7 L540.0 228.9 L541.0 227.5 L542.0 226.4 L543.0 225.7 L544.0 225.4 L545.0 225.5 L546.0 225.9 L547.0 226.8 L548.0 228.0 L549.0 229.6 L550.0 231.5 L551.0 233.8 L552.0 236.4 L553.0 239.4 L554.0 242.6 L555.0 246.2 L556.0 250.0 L557.0 254.1 L558.0 258.4 L559.0 263.0 L560.0 267.7 L561.0 272.5 L562.0 277.6 L563.0 282.7 L564.0 287.9 L565.0 293.2 L566.0 298.6 L567.0 304.0 L568.0 309.4 L569.0 314.8 L570.0 320.3 L571.0 325.8 L572.0 331.2 L573.0 336.7 L574.0 342.1 L575.0 347.6 L576.0 353.1 L577.0 358.7 L578.0 364.2 L579.0 369.8 L580.0 375.5 L581.0 381.2 L582.0 387.0 L583.0 392.8 L584.0 398.7 L585.0 404.6 L586.0 410.5 L587.0 416.4 L588.0 422.3 L589.0 428.1 L590.0 433.8 L591.0 439.3 L592.0 444.7 L593.0 449.8 L594.0 454.7 L595.0 459.2 L596.0 463.3 L597.0 466.9 L598.0 470.2 L599.0 472.8 L600.0 475.0 L601.0 476.6 L602.0 477.5 L603.0 477.9 L604.0 477.7 L605.0 476.8 L606.0 475.3 L607.0 473.3 L608.0 470.7 L609.0 467.6 L610.0 464.0 L611.0 460.0 L612.0 455.6 L613.0 450.8 L614.0 445.8 L615.0 440.4 L616.0 434.9 L617.0 429.2 L618.0 423.5 L619.0 417.6 L620.0 411.7 L621.0 405.8 L622.0 399.9 L623.0 394.0 L624.0 388.1 L625.0 382.4 L626.0 376.6 L627.0 371.0 L628.0 365.3 L629.0 359.8 L630.0 354.2 L631.0 348.7 L632.0 343.2 L633.0 337.8 L634.0 332.3 L635.0 326.8 L636.0 321.4 L637.0 315.9 L638.0 310.5 L639.0 305.1 L640.0 299.7 L641.0 294.3 L642.0 289.0 L643.0 283.7 L644.0 278.6 L645.0 273.5 L646.0 268.6 L647.0 263.9 L648.0 259.3 L649.0 255.0 L650.0 250.8 L651.0 246.9 L652.0 243.3 L653.0 240.0 L654.0 237.0 L655.0 234.3 L656.0 231.9 L657.0 229.9 L658.0 228.3 L659.0 227.0 L660.0 226.1 L661.0 225.6 L662.0 225.4 L663.0 225.6 L664.0 226.2 L665.0 227.2 L666.0 228.6 L667.0 230.3 L668.0 232.4 L669.0 234.8 L670.0 237.6 L671.0 240.6 L672.0 244.0 L673.0 247.7 L674.0 251.6 L675.0 255.8 L676.0 260.2 L677.0 264.8 L678.0 269.6 L679.0 274.5 L680.0 279.6 L681.0 284.8 L682.0 290.0 L683.0 295.4 L684.0 300.7 L685.0 306.1 L686.0 311.6 L687.0 317.0 L688.0 322.5 L689.0 327.9 L690.0 333.4 L691.0 338.9 L692.0 344.3 L693.0 349.8 L694.0 355.3 L695.0 360.9 L696.0 366.5 L697.0 372.1 L698.0 377.8 L699.0 383.5 L700.0 389.3 L701.0 395.2 L702.0 401.0 L703.0 406.9 L704.0 412.9 L705.0 418.8 L706.0 424.6 L707.0 430.4 L708.0 436.0 L709.0 441.5 L710.0 446.8 L711.0 451.8 L712.0 456.5 L713.0 460.9 L714.0 464.8 L715.0 468.3 L716.0 471.3 L717.0 473.8 L718.0 475.7 L719.0 477.0 L720.0 477.7 L721.0 477.9 L722.0 477.4 L723.0 476.3 L724.0 474.6 L725.0 472.3 L726.0 469.6 L727.0 466.3 L728.0 462.5 L729.0 458.3 L730.0 453.7 L731.0 448.8 L732.0 443.7 L733.0 438.2 L734.0 432.7 L735.0 426.9 L736.0 421.1 L737.0 415.2 L738.0 409.3 L739.0 403.4 L740.0 397.5 L741.0 391.6 L742.0 385.8 L743.0 380.1 L744.0 374.4 L745.0 368.7 L746.0 363.1 L747.0 357.5 L748.0 352.0 L749.0 346.5 L750.0 341.0 L751.0 335.6 L752.0 330.1 L753.0 324.7 L754.0 319.2 L755.0 313.8 L756.0 308.3 L757.0 302.9 L758.0 297.5 L759.0 292.2 L760.0 286.9 L761.0 281.7 L762.0 276.5 L763.0 271.6 L764.0 266.7 L765.0 262.0 L766.0 257.5 L767.0 253.3 L768.0 249.2 L769.0 245.5 L770.0 242.0 L771.0 238.8 L772.0 235.9 L773.0 233.3 L774.0 231.1 L775.0 229.2 L776.0 227.7 L777.0 226.6 L778.0 225.8 L779.0 225.4 L780.0 225.4 L781.0 225.8 L782.0 226.6 L783.0 227.7 L784.0 229.2 L785.0 231.1 L786.0 233.3 L787.0 235.9 L788.0 238.8 L789.0 242.0 L790.0 245.5 L791.0 249.2 L792.0 253.3 L793.0 257.5 L794.0 262.0 L795.0 266.7 L796.0 271.6 L797.0 276.5 L798.0 281.7 L799.0 286.9 L800.0 292.2 L801.0 297.5 L802.0 302.9 L803.0 308.3 L804.0 313.8 L805.0 319.2 L806.0 324.7 L807.0 330.1 L808.0 335.6 L809.0 341.0 L810.0 346.5 L811.0 352.0 L812.0 357.5 L813.0 363.1 L814.0 368.7 L815.0 374.4 L816.0 380.1 L817.0 385.8 L818.0 391.6 L819.0 397.5 L820.0 403.4 L821.0 409.3 L822.0 415.2 L823.0 421.1 L824.0 426.9 L825.0 432.7 L826.0 438.2 L827.0 443.7 L828.0 448.8 L829.0 453.7 L830.0 458.3 L831.0 462.5 L832.0 466.3 L833.0 469.6 L834.0 472.3 L835.0 474.6 L836.0 476.3 L837.0 477.4 L838.0 477.9 L839.0 477.7 L840.0 477.0 L841.0 475.7 L842.0 473.8 L843.0 471.3 L844.0 468.3 L845.0 464.8 L846.0 460.9 L847.0 456.5 L848.0 451.8 L849.0 446.8 L850.0 441.5 L851.0 436.0 L852.0 430.4 L853.0 424.6 L854.0 418.8 L855.0 412.9 L856.0 406.9 L857.0 401.0 L858.0 395.2 L859.0 389.3 L860.0 383.5 L861.0 377.8 L862.0 372.1 L863.0 366.5 L864.0 360.9 L865.0 355.3 L866.0 349.8 L867.0 344.3 L868.0 338.9 L869.0 333.4 L870.0 327.9 L871.0 322.5 L872.0 317.0 L873.0 311.6 L874.0 306.1 L875.0 300.7 L876.0 295.4 L877.0 290.0 L878.0 284.8 L879.0 279.6 L880.0 274.5 L881.0 269.6 L882.0 264.8 L883.0 260.2 L884.0 255.8 L885.0 251.6 L886.0 247.7 L887.0 244.0 L888.0 240.6 L889.0 237.6 L890.0 234.8 L891.0 232.4 L892.0 230.3 L893.0 228.6 L894.0 227.2 L895.0 226.2 L896.0 225.6 L897.0 225.4 L898.0 225.6 L899.0 226.1 L900.0 227.0 L901.0 228.3 L902.0 229.9 L903.0 231.9 L904.0 234.3 L905.0 237.0 L906.0 240.0 L907.0 243.3 L908.0 246.9 L909.0 250.8 L910.0 255.0 L911.0 259.3 L912.0 263.9 L913.0 268.6 L914.0 273.5 L915.0 278.6 L916.0 283.7 L917.0 289.0 L918.0 294.3 L919.0 299.7 L920.0 305.1 L921.0 310.5 L922.0 315.9 L923.0 321.4 L924.0 326.8 L925.0 332.3 L926.0 337.8 L927.0 343.2 L928.0 348.7 L929.0 354.2 L930.0 359.8 L931.0 365.3 L932.0 371.0 L933.0 376.6 L934.0 382.4 L935.0 388.1 L936.0 394.0 L937.0 399.9 L938.0 405.8 L939.0 411.7 L940.0 417.6 L941.0 423.5 L942.0 429.2 L943.0 434.9 L944.0 440.4 L945.0 445.8 L946.0 450.8 L947.0 455.6 L948.0 460.0 L949.0 464.0 L950.0 467.6 L951.0 470.7 L952.0 473.3 L953.0 475.3 L954.0 476.8 L955.0 477.7 L956.0 477.9 L957.0 477.5 L958.0 476.6 L959.0 475.0 L960.0 472.8 L961.0 470.2 L962.0 466.9 L963.0 463.3 L964.0 459.2 L965.0 454.7 L966.0 449.8 L967.0 444.7 L968.0 439.3 L969.0 433.8 L970.0 428.1 L971.0 422.3 L972.0 416.4 L973.0 410.5 L974.0 404.6 L975.0 398.7 L976.0 392.8 L977.0 387.0 L978.0 381.2 L979.0 375.5 L980.0 369.8 L981.0 364.2 L982.0 358.7 L983.0 353.1 L984.0 347.6" fill="none" stroke="#2264de" stroke-width="2.1" stroke-linejoin="round"/>
<path d="M84.0 249.2 L85.0 252.9 L86.0 256.8 L87.0 261.0 L88.0 265.4 L89.0 270.0 L90.0 274.8 L91.0 279.7 L92.0 284.8 L93.0 290.0 L94.0 295.2 L95.0 300.6 L96.0 305.9 L97.0 311.3 L98.0 316.8 L99.0 322.2 L100.0 327.7 L101.0 333.1 L102.0 338.6 L103.0 344.1 L104.0 349.5 L105.0 355.0 L106.0 360.5 L107.0 366.1 L108.0 371.7 L109.0 377.3 L110.0 383.0 L111.0 388.7 L112.0 394.5 L113.0 400.4 L114.0 406.2 L115.0 412.1 L116.0 418.1 L117.0 424.0 L118.0 429.8 L119.0 435.6 L120.0 441.2 L121.0 446.7 L122.0 452.0 L123.0 457.0 L124.0 461.7 L125.0 466.1 L126.0 470.0 L127.0 473.5 L128.0 476.5 L129.0 479.0 L130.0 480.9 L131.0 482.2 L132.0 482.9 L133.0 483.1 L134.0 482.6 L135.0 481.5 L136.0 479.8 L137.0 477.5 L138.0 474.8 L139.0 471.5 L140.0 467.7 L141.0 463.5 L142.0 458.9 L143.0 454.0 L144.0 448.9 L145.0 443.4 L146.0 437.9 L147.0 432.1 L148.0 426.3 L149.0 420.4 L150.0 414.5 L151.0 408.6 L152.0 402.7 L153.0 396.8 L154.0 391.0 L155.0 385.3 L156.0 379.6 L157.0 373.9 L158.0 368.3 L159.0 362.7 L160.0 357.2 L161.0 351.7 L162.0 346.2 L163.0 340.8 L164.0 335.3 L165.0 329.9 L166.0 324.4 L167.0 319.0 L168.0 313.5 L169.0 308.1 L170.0 302.7 L171.0 297.4 L172.0 292.1 L173.0 286.9 L174.0 281.7 L175.0 276.8 L176.0 271.9 L177.0 267.2 L178.0 262.7 L179.0 258.5 L180.0 254.4 L181.0 250.7 L182.0 247.2 L183.0 244.0 L184.0 241.1 L185.0 238.5 L186.0 236.3 L187.0 234.4 L188.0 232.9 L189.0 231.8 L190.0 231.0 L191.0 230.6 L192.0 230.6 L193.0 231.0 L194.0 231.8 L195.0 232.9 L196.0 234.4 L197.0 236.3 L198.0 238.5 L199.0 241.1 L200.0 244.0 L201.0 247.2 L202.0 250.7 L203.0 254.4 L204.0 258.5 L205.0 262.7 L206.0 267.2 L207.0 271.9 L208.0 276.8 L209.0 281.7 L210.0 286.9 L211.0 292.1 L212.0 297.4 L213.0 302.7 L214.0 308.1 L215.0 313.5 L216.0 319.0 L217.0 324.4 L218.0 329.9 L219.0 335.3 L220.0 340.8 L221.0 346.2 L222.0 351.7 L223.0 357.2 L224.0 362.7 L225.0 368.3 L226.0 373.9 L227.0 379.6 L228.0 385.3 L229.0 391.0 L230.0 396.8 L231.0 402.7 L232.0 408.6 L233.0 414.5 L234.0 420.4 L235.0 426.3 L236.0 432.1 L237.0 437.9 L238.0 443.4 L239.0 448.9 L240.0 454.0 L241.0 458.9 L242.0 463.5 L243.0 467.7 L244.0 471.5 L245.0 474.8 L246.0 477.5 L247.0 479.8 L248.0 481.5 L249.0 482.6 L250.0 483.1 L251.0 482.9 L252.0 482.2 L253.0 480.9 L254.0 479.0 L255.0 476.5 L256.0 473.5 L257.0 470.0 L258.0 466.1 L259.0 461.7 L260.0 457.0 L261.0 452.0 L262.0 446.7 L263.0 441.2 L264.0 435.6 L265.0 429.8 L266.0 424.0 L267.0 418.1 L268.0 412.1 L269.0 406.2 L270.0 400.4 L271.0 394.5 L272.0 388.7 L273.0 383.0 L274.0 377.3 L275.0 371.7 L276.0 366.1 L277.0 360.5 L278.0 355.0 L279.0 349.5 L280.0 344.1 L281.0 338.6 L282.0 333.1 L283.0 327.7 L284.0 322.2 L285.0 316.8 L286.0 311.3 L287.0 305.9 L288.0 300.6 L289.0 295.2 L290.0 290.0 L291.0 284.8 L292.0 279.7 L293.0 274.8 L294.0 270.0 L295.0 265.4 L296.0 261.0 L297.0 256.8 L298.0 252.9 L299.0 249.2 L300.0 245.8 L301.0 242.8 L302.0 240.0 L303.0 237.6 L304.0 235.5 L305.0 233.8 L306.0 232.4 L307.0 231.4 L308.0 230.8 L309.0 230.6 L310.0 230.8 L311.0 231.3 L312.0 232.2 L313.0 233.5 L314.0 235.1 L315.0 237.1 L316.0 239.5 L317.0 242.2 L318.0 245.2 L319.0 248.5 L320.0 252.1 L321.0 256.0 L322.0 260.2 L323.0 264.5 L324.0 269.1 L325.0 273.8 L326.0 278.7 L327.0 283.8 L328.0 288.9 L329.0 294.2 L330.0 299.5 L331.0 304.9 L332.0 310.3 L333.0 315.7 L334.0 321.1 L335.0 326.6 L336.0 332.0 L337.0 337.5 L338.0 343.0 L339.0 348.4 L340.0 353.9 L341.0 359.4 L342.0 365.0 L343.0 370.5 L344.0 376.2 L345.0 381.8 L346.0 387.6 L347.0 393.3 L348.0 399.2 L349.0 405.1 L350.0 411.0 L351.0 416.9 L352.0 422.8 L353.0 428.7 L354.0 434.4 L355.0 440.1 L356.0 445.6 L357.0 451.0 L358.0 456.0 L359.0 460.8 L360.0 465.2 L361.0 469.2 L362.0 472.8 L363.0 475.9 L364.0 478.5 L365.0 480.5 L366.0 482.0 L367.0 482.9 L368.0 483.1 L369.0 482.7 L370.0 481.8 L371.0 480.2 L372.0 478.0 L373.0 475.4 L374.0 472.1 L375.0 468.5 L376.0 464.4 L377.0 459.9 L378.0 455.0 L379.0 449.9 L380.0 444.5 L381.0 439.0 L382.0 433.3 L383.0 427.5 L384.0 421.6 L385.0 415.7 L386.0 409.8 L387.0 403.9 L388.0 398.0 L389.0 392.2 L390.0 386.4 L391.0 380.7 L392.0 375.0 L393.0 369.4 L394.0 363.9 L395.0 358.3 L396.0 352.8 L397.0 347.3 L398.0 341.9 L399.0 336.4 L400.0 331.0 L401.0 325.5 L402.0 320.0 L403.0 314.6 L404.0 309.2 L405.0 303.8 L406.0 298.4 L407.0 293.1 L408.0 287.9 L409.0 282.8 L410.0 277.7 L411.0 272.9 L412.0 268.2 L413.0 263.6 L414.0 259.3 L415.0 255.2 L416.0 251.4 L417.0 247.8 L418.0 244.6 L419.0 241.6 L420.0 239.0 L421.0 236.7 L422.0 234.8 L423.0 233.2 L424.0 232.0 L425.0 231.1 L426.0 230.7 L427.0 230.6 L428.0 230.9 L429.0 231.6 L430.0 232.7 L431.0 234.1 L432.0 235.9 L433.0 238.0 L434.0 240.5 L435.0 243.4 L436.0 246.5 L437.0 249.9 L438.0 253.7 L439.0 257.6 L440.0 261.9 L441.0 266.3 L442.0 271.0 L443.0 275.8 L444.0 280.7 L445.0 285.8 L446.0 291.0 L447.0 296.3 L448.0 301.6 L449.0 307.0 L450.0 312.4 L451.0 317.9 L452.0 323.3 L453.0 328.8 L454.0 334.2 L455.0 339.7 L456.0 345.1 L457.0 350.6 L458.0 356.1 L459.0 361.6 L460.0 367.2 L461.0 372.8 L462.0 378.4 L463.0 384.1 L464.0 389.9 L465.0 395.7 L466.0 401.5 L467.0 407.4 L468.0 413.3 L469.0 419.2 L470.0 425.1 L471.0 431.0 L472.0 436.7 L473.0 442.3 L474.0 447.8 L475.0 453.0 L476.0 458.0 L477.0 462.6 L478.0 466.9 L479.0 470.7 L480.0 474.1 L481.0 477.0 L482.0 479.4 L483.0 481.2 L484.0 482.4 L485.0 483.0 L486.0 483.0 L487.0 482.4 L488.0 481.2 L489.0 479.4 L490.0 477.0 L491.0 474.1 L492.0 470.7 L493.0 466.9 L494.0 462.6 L495.0 458.0 L496.0 453.0 L497.0 447.8 L498.0 442.3 L499.0 436.7 L500.0 431.0 L501.0 425.1 L502.0 419.2 L503.0 413.3 L504.0 407.4 L505.0 401.5 L506.0 395.7 L507.0 389.9 L508.0 384.1 L509.0 378.4 L510.0 372.8 L511.0 367.2 L512.0 361.6 L513.0 356.1 L514.0 350.6 L515.0 345.1 L516.0 339.7 L517.0 334.2 L518.0 328.8 L519.0 323.3 L520.0 317.9 L521.0 312.4 L522.0 307.0 L523.0 301.6 L524.0 296.3 L525.0 291.0 L526.0 285.8 L527.0 280.7 L528.0 275.8 L529.0 271.0 L530.0 266.3 L531.0 261.9 L532.0 257.6 L533.0 253.7 L534.0 249.9 L535.0 246.5 L536.0 243.4 L537.0 240.5 L538.0 238.0 L539.0 235.9 L540.0 234.1 L541.0 232.7 L542.0 231.6 L543.0 230.9 L544.0 230.6 L545.0 230.7 L546.0 231.1 L547.0 232.0 L548.0 233.2 L549.0 234.8 L550.0 236.7 L551.0 239.0 L552.0 241.6 L553.0 244.6 L554.0 247.8 L555.0 251.4 L556.0 255.2 L557.0 259.3 L558.0 263.6 L559.0 268.2 L560.0 272.9 L561.0 277.7 L562.0 282.8 L563.0 287.9 L564.0 293.1 L565.0 298.4 L566.0 303.8 L567.0 309.2 L568.0 314.6 L569.0 320.0 L570.0 325.5 L571.0 331.0 L572.0 336.4 L573.0 341.9 L574.0 347.3 L575.0 352.8 L576.0 358.3 L577.0 363.9 L578.0 369.4 L579.0 375.0 L580.0 380.7 L581.0 386.4 L582.0 392.2 L583.0 398.0 L584.0 403.9 L585.0 409.8 L586.0 415.7 L587.0 421.6 L588.0 427.5 L589.0 433.3 L590.0 439.0 L591.0 444.5 L592.0 449.9 L593.0 455.0 L594.0 459.9 L595.0 464.4 L596.0 468.5 L597.0 472.1 L598.0 475.4 L599.0 478.0 L600.0 480.2 L601.0 481.8 L602.0 482.7 L603.0 483.1 L604.0 482.9 L605.0 482.0 L606.0 480.5 L607.0 478.5 L608.0 475.9 L609.0 472.8 L610.0 469.2 L611.0 465.2 L612.0 460.8 L613.0 456.0 L614.0 451.0 L615.0 445.6 L616.0 440.1 L617.0 434.4 L618.0 428.7 L619.0 422.8 L620.0 416.9 L621.0 411.0 L622.0 405.1 L623.0 399.2 L624.0 393.3 L625.0 387.6 L626.0 381.8 L627.0 376.2 L628.0 370.5 L629.0 365.0 L630.0 359.4 L631.0 353.9 L632.0 348.4 L633.0 343.0 L634.0 337.5 L635.0 332.0 L636.0 326.6 L637.0 321.1 L638.0 315.7 L639.0 310.3 L640.0 304.9 L641.0 299.5 L642.0 294.2 L643.0 288.9 L644.0 283.8 L645.0 278.7 L646.0 273.8 L647.0 269.1 L648.0 264.5 L649.0 260.2 L650.0 256.0 L651.0 252.1 L652.0 248.5 L653.0 245.2 L654.0 242.2 L655.0 239.5 L656.0 237.1 L657.0 235.1 L658.0 233.5 L659.0 232.2 L660.0 231.3 L661.0 230.8 L662.0 230.6 L663.0 230.8 L664.0 231.4 L665.0 232.4 L666.0 233.8 L667.0 235.5 L668.0 237.6 L669.0 240.0 L670.0 242.8 L671.0 245.8 L672.0 249.2 L673.0 252.9 L674.0 256.8 L675.0 261.0 L676.0 265.4 L677.0 270.0 L678.0 274.8 L679.0 279.7 L680.0 284.8 L681.0 290.0 L682.0 295.2 L683.0 300.6 L684.0 305.9 L685.0 311.3 L686.0 316.8 L687.0 322.2 L688.0 327.7 L689.0 333.1 L690.0 338.6 L691.0 344.1 L692.0 349.5 L693.0 355.0 L694.0 360.5 L695.0 366.1 L696.0 371.7 L697.0 377.3 L698.0 383.0 L699.0 388.7 L700.0 394.5 L701.0 400.4 L702.0 406.2 L703.0 412.1 L704.0 418.1 L705.0 424.0 L706.0 429.8 L707.0 435.6 L708.0 441.2 L709.0 446.7 L710.0 452.0 L711.0 457.0 L712.0 461.7 L713.0 466.1 L714.0 470.0 L715.0 473.5 L716.0 476.5 L717.0 479.0 L718.0 480.9 L719.0 482.2 L720.0 482.9 L721.0 483.1 L722.0 482.6 L723.0 481.5 L724.0 479.8 L725.0 477.5 L726.0 474.8 L727.0 471.5 L728.0 467.7 L729.0 463.5 L730.0 458.9 L731.0 454.0 L732.0 448.9 L733.0 443.4 L734.0 437.9 L735.0 432.1 L736.0 426.3 L737.0 420.4 L738.0 414.5 L739.0 408.6 L740.0 402.7 L741.0 396.8 L742.0 391.0 L743.0 385.3 L744.0 379.6 L745.0 373.9 L746.0 368.3 L747.0 362.7 L748.0 357.2 L749.0 351.7 L750.0 346.2 L751.0 340.8 L752.0 335.3 L753.0 329.9 L754.0 324.4 L755.0 319.0 L756.0 313.5 L757.0 308.1 L758.0 302.7 L759.0 297.4 L760.0 292.1 L761.0 286.9 L762.0 281.7 L763.0 276.8 L764.0 271.9 L765.0 267.2 L766.0 262.7 L767.0 258.5 L768.0 254.4 L769.0 250.7 L770.0 247.2 L771.0 244.0 L772.0 241.1 L773.0 238.5 L774.0 236.3 L775.0 234.4 L776.0 232.9 L777.0 231.8 L778.0 231.0 L779.0 230.6 L780.0 230.6 L781.0 231.0 L782.0 231.8 L783.0 232.9 L784.0 234.4 L785.0 236.3 L786.0 238.5 L787.0 241.1 L788.0 244.0 L789.0 247.2 L790.0 250.7 L791.0 254.4 L792.0 258.5 L793.0 262.7 L794.0 267.2 L795.0 271.9 L796.0 276.8 L797.0 281.7 L798.0 286.9 L799.0 292.1 L800.0 297.4 L801.0 302.7 L802.0 308.1 L803.0 313.5 L804.0 319.0 L805.0 324.4 L806.0 329.9 L807.0 335.3 L808.0 340.8 L809.0 346.2 L810.0 351.7 L811.0 357.2 L812.0 362.7 L813.0 368.3 L814.0 373.9 L815.0 379.6 L816.0 385.3 L817.0 391.0 L818.0 396.8 L819.0 402.7 L820.0 408.6 L821.0 414.5 L822.0 420.4 L823.0 426.3 L824.0 432.1 L825.0 437.9 L826.0 443.4 L827.0 448.9 L828.0 454.0 L829.0 458.9 L830.0 463.5 L831.0 467.7 L832.0 471.5 L833.0 474.8 L834.0 477.5 L835.0 479.8 L836.0 481.5 L837.0 482.6 L838.0 483.1 L839.0 482.9 L840.0 482.2 L841.0 480.9 L842.0 479.0 L843.0 476.5 L844.0 473.5 L845.0 470.0 L846.0 466.1 L847.0 461.7 L848.0 457.0 L849.0 452.0 L850.0 446.7 L851.0 441.2 L852.0 435.6 L853.0 429.8 L854.0 424.0 L855.0 418.1 L856.0 412.1 L857.0 406.2 L858.0 400.4 L859.0 394.5 L860.0 388.7 L861.0 383.0 L862.0 377.3 L863.0 371.7 L864.0 366.1 L865.0 360.5 L866.0 355.0 L867.0 349.5 L868.0 344.1 L869.0 338.6 L870.0 333.1 L871.0 327.7 L872.0 322.2 L873.0 316.8 L874.0 311.3 L875.0 305.9 L876.0 300.6 L877.0 295.2 L878.0 290.0 L879.0 284.8 L880.0 279.7 L881.0 274.8 L882.0 270.0 L883.0 265.4 L884.0 261.0 L885.0 256.8 L886.0 252.9 L887.0 249.2 L888.0 245.8 L889.0 242.8 L890.0 240.0 L891.0 237.6 L892.0 235.5 L893.0 233.8 L894.0 232.4 L895.0 231.4 L896.0 230.8 L897.0 230.6 L898.0 230.8 L899.0 231.3 L900.0 232.2 L901.0 233.5 L902.0 235.1 L903.0 237.1 L904.0 239.5 L905.0 242.2 L906.0 245.2 L907.0 248.5 L908.0 252.1 L909.0 256.0 L910.0 260.2 L911.0 264.5 L912.0 269.1 L913.0 273.8 L914.0 278.7 L915.0 283.8 L916.0 288.9 L917.0 294.2 L918.0 299.5 L919.0 304.9 L920.0 310.3 L921.0 315.7 L922.0 321.1 L923.0 326.6 L924.0 332.0 L925.0 337.5 L926.0 343.0 L927.0 348.4 L928.0 353.9 L929.0 359.4 L930.0 365.0 L931.0 370.5 L932.0 376.2 L933.0 381.8 L934.0 387.6 L935.0 393.3 L936.0 399.2 L937.0 405.1 L938.0 411.0 L939.0 416.9 L940.0 422.8 L941.0 428.7 L942.0 434.4 L943.0 440.1 L944.0 445.6 L945.0 451.0 L946.0 456.0 L947.0 460.8 L948.0 465.2 L949.0 469.2 L950.0 472.8 L951.0 475.9 L952.0 478.5 L953.0 480.5 L954.0 482.0 L955.0 482.9 L956.0 483.1 L957.0 482.7 L958.0 481.8 L959.0 480.2 L960.0 478.0 L961.0 475.4 L962.0 472.1 L963.0 468.5 L964.0 464.4 L965.0 459.9 L966.0 455.0 L967.0 449.9 L968.0 444.5 L969.0 439.0 L970.0 433.3 L971.0 427.5 L972.0 421.6 L973.0 415.7 L974.0 409.8 L975.0 403.9 L976.0 398.0 L977.0 392.2 L978.0 386.4 L979.0 380.7 L980.0 375.0 L981.0 369.4 L982.0 363.9 L983.0 358.3 L984.0 352.8" fill="none" stroke="#2264de" stroke-width="2.1" stroke-linejoin="round"/>
<path d="M84.0 245.7 L85.0 249.4 L86.0 253.3 L87.0 257.5 L88.0 261.9 L89.0 266.5 L90.0 271.3 L91.0 276.2 L92.0 281.3 L93.0 286.5 L94.0 291.7 L95.0 297.1 L96.0 302.4 L97.0 307.8 L98.0 313.3 L99.0 318.7 L100.0 324.2 L101.0 329.6 L102.0 335.1 L103.0 340.6 L104.0 346.0 L105.0 351.5 L106.0 357.0 L107.0 362.6 L108.0 368.2 L109.0 373.8 L110.0 379.5 L111.0 385.2 L112.0 391.0 L113.0 396.9 L114.0 402.7 L115.0 408.6 L116.0 414.6 L117.0 420.5 L118.0 426.3 L119.0 432.1 L120.0 437.7 L121.0 443.2 L122.0 448.5 L123.0 453.5 L124.0 458.2 L125.0 462.6 L126.0 466.5 L127.0 470.0 L128.0 473.0 L129.0 475.5 L130.0 477.4 L131.0 478.7 L132.0 479.4 L133.0 479.6 L134.0 479.1 L135.0 478.0 L136.0 476.3 L137.0 474.0 L138.0 471.3 L139.0 468.0 L140.0 464.2 L141.0 460.0 L142.0 455.4 L143.0 450.5 L144.0 445.4 L145.0 439.9 L146.0 434.4 L147.0 428.6 L148.0 422.8 L149.0 416.9 L150.0 411.0 L151.0 405.1 L152.0 399.2 L153.0 393.3 L154.0 387.5 L155.0 381.8 L156.0 376.1 L157.0 370.4 L158.0 364.8 L159.0 359.2 L160.0 353.7 L161.0 348.2 L162.0 342.7 L163.0 337.3 L164.0 331.8 L165.0 326.4 L166.0 320.9 L167.0 315.5 L168.0 310.0 L169.0 304.6 L170.0 299.2 L171.0 293.9 L172.0 288.6 L173.0 283.4 L174.0 278.2 L175.0 273.3 L176.0 268.4 L177.0 263.7 L178.0 259.2 L179.0 255.0 L180.0 250.9 L181.0 247.2 L182.0 243.7 L183.0 240.5 L184.0 237.6 L185.0 235.0 L186.0 232.8 L187.0 230.9 L188.0 229.4 L189.0 228.3 L190.0 227.5 L191.0 227.1 L192.0 227.1 L193.0 227.5 L194.0 228.3 L195.0 229.4 L196.0 230.9 L197.0 232.8 L198.0 235.0 L199.0 237.6 L200.0 240.5 L201.0 243.7 L202.0 247.2 L203.0 250.9 L204.0 255.0 L205.0 259.2 L206.0 263.7 L207.0 268.4 L208.0 273.3 L209.0 278.2 L210.0 283.4 L211.0 288.6 L212.0 293.9 L213.0 299.2 L214.0 304.6 L215.0 310.0 L216.0 315.5 L217.0 320.9 L218.0 326.4 L219.0 331.8 L220.0 337.3 L221.0 342.7 L222.0 348.2 L223.0 353.7 L224.0 359.2 L225.0 364.8 L226.0 370.4 L227.0 376.1 L228.0 381.8 L229.0 387.5 L230.0 393.3 L231.0 399.2 L232.0 405.1 L233.0 411.0 L234.0 416.9 L235.0 422.8 L236.0 428.6 L237.0 434.4 L238.0 439.9 L239.0 445.4 L240.0 450.5 L241.0 455.4 L242.0 460.0 L243.0 464.2 L244.0 468.0 L245.0 471.3 L246.0 474.0 L247.0 476.3 L248.0 478.0 L249.0 479.1 L250.0 479.6 L251.0 479.4 L252.0 478.7 L253.0 477.4 L254.0 475.5 L255.0 473.0 L256.0 470.0 L257.0 466.5 L258.0 462.6 L259.0 458.2 L260.0 453.5 L261.0 448.5 L262.0 443.2 L263.0 437.7 L264.0 432.1 L265.0 426.3 L266.0 420.5 L267.0 414.6 L268.0 408.6 L269.0 402.7 L270.0 396.9 L271.0 391.0 L272.0 385.2 L273.0 379.5 L274.0 373.8 L275.0 368.2 L276.0 362.6 L277.0 357.0 L278.0 351.5 L279.0 346.0 L280.0 340.6 L281.0 335.1 L282.0 329.6 L283.0 324.2 L284.0 318.7 L285.0 313.3 L286.0 307.8 L287.0 302.4 L288.0 297.1 L289.0 291.7 L290.0 286.5 L291.0 281.3 L292.0 276.2 L293.0 271.3 L294.0 266.5 L295.0 261.9 L296.0 257.5 L297.0 253.3 L298.0 249.4 L299.0 245.7 L300.0 242.3 L301.0 239.3 L302.0 236.5 L303.0 234.1 L304.0 232.0 L305.0 230.3 L306.0 228.9 L307.0 227.9 L308.0 227.3 L309.0 227.1 L310.0 227.3 L311.0 227.8 L312.0 228.7 L313.0 230.0 L314.0 231.6 L315.0 233.6 L316.0 236.0 L317.0 238.7 L318.0 241.7 L319.0 245.0 L320.0 248.6 L321.0 252.5 L322.0 256.7 L323.0 261.0 L324.0 265.6 L325.0 270.3 L326.0 275.2 L327.0 280.3 L328.0 285.4 L329.0 290.7 L330.0 296.0 L331.0 301.4 L332.0 306.8 L333.0 312.2 L334.0 317.6 L335.0 323.1 L336.0 328.5 L337.0 334.0 L338.0 339.5 L339.0 344.9 L340.0 350.4 L341.0 355.9 L342.0 361.5 L343.0 367.0 L344.0 372.7 L345.0 378.3 L346.0 384.1 L347.0 389.8 L348.0 395.7 L349.0 401.6 L350.0 407.5 L351.0 413.4 L352.0 419.3 L353.0 425.2 L354.0 430.9 L355.0 436.6 L356.0 442.1 L357.0 447.5 L358.0 452.5 L359.0 457.3 L360.0 461.7 L361.0 465.7 L362.0 469.3 L363.0 472.4 L364.0 475.0 L365.0 477.0 L366.0 478.5 L367.0 479.4 L368.0 479.6 L369.0 479.2 L370.0 478.3 L371.0 476.7 L372.0 474.5 L373.0 471.9 L374.0 468.6 L375.0 465.0 L376.0 460.9 L377.0 456.4 L378.0 451.5 L379.0 446.4 L380.0 441.0 L381.0 435.5 L382.0 429.8 L383.0 424.0 L384.0 418.1 L385.0 412.2 L386.0 406.3 L387.0 400.4 L388.0 394.5 L389.0 388.7 L390.0 382.9 L391.0 377.2 L392.0 371.5 L393.0 365.9 L394.0 360.4 L395.0 354.8 L396.0 349.3 L397.0 343.8 L398.0 338.4 L399.0 332.9 L400.0 327.5 L401.0 322.0 L402.0 316.5 L403.0 311.1 L404.0 305.7 L405.0 300.3 L406.0 294.9 L407.0 289.6 L408.0 284.4 L409.0 279.3 L410.0 274.2 L411.0 269.4 L412.0 264.7 L413.0 260.1 L414.0 255.8 L415.0 251.7 L416.0 247.9 L417.0 244.3 L418.0 241.1 L419.0 238.1 L420.0 235.5 L421.0 233.2 L422.0 231.3 L423.0 229.7 L424.0 228.5 L425.0 227.6 L426.0 227.2 L427.0 227.1 L428.0 227.4 L429.0 228.1 L430.0 229.2 L431.0 230.6 L432.0 232.4 L433.0 234.5 L434.0 237.0 L435.0 239.9 L436.0 243.0 L437.0 246.4 L438.0 250.2 L439.0 254.1 L440.0 258.4 L441.0 262.8 L442.0 267.5 L443.0 272.3 L444.0 277.2 L445.0 282.3 L446.0 287.5 L447.0 292.8 L448.0 298.1 L449.0 303.5 L450.0 308.9 L451.0 314.4 L452.0 319.8 L453.0 325.3 L454.0 330.7 L455.0 336.2 L456.0 341.6 L457.0 347.1 L458.0 352.6 L459.0 358.1 L460.0 363.7 L461.0 369.3 L462.0 374.9 L463.0 380.6 L464.0 386.4 L465.0 392.2 L466.0 398.0 L467.0 403.9 L468.0 409.8 L469.0 415.7 L470.0 421.6 L471.0 427.5 L472.0 433.2 L473.0 438.8 L474.0 444.3 L475.0 449.5 L476.0 454.5 L477.0 459.1 L478.0 463.4 L479.0 467.2 L480.0 470.6 L481.0 473.5 L482.0 475.9 L483.0 477.7 L484.0 478.9 L485.0 479.5 L486.0 479.5 L487.0 478.9 L488.0 477.7 L489.0 475.9 L490.0 473.5 L491.0 470.6 L492.0 467.2 L493.0 463.4 L494.0 459.1 L495.0 454.5 L496.0 449.5 L497.0 444.3 L498.0 438.8 L499.0 433.2 L500.0 427.5 L501.0 421.6 L502.0 415.7 L503.0 409.8 L504.0 403.9 L505.0 398.0 L506.0 392.2 L507.0 386.4 L508.0 380.6 L509.0 374.9 L510.0 369.3 L511.0 363.7 L512.0 358.1 L513.0 352.6 L514.0 347.1 L515.0 341.6 L516.0 336.2 L517.0 330.7 L518.0 325.3 L519.0 319.8 L520.0 314.4 L521.0 308.9 L522.0 303.5 L523.0 298.1 L524.0 292.8 L525.0 287.5 L526.0 282.3 L527.0 277.2 L528.0 272.3 L529.0 267.5 L530.0 262.8 L531.0 258.4 L532.0 254.1 L533.0 250.2 L534.0 246.4 L535.0 243.0 L536.0 239.9 L537.0 237.0 L538.0 234.5 L539.0 232.4 L540.0 230.6 L541.0 229.2 L542.0 228.1 L543.0 227.4 L544.0 227.1 L545.0 227.2 L546.0 227.6 L547.0 228.5 L548.0 229.7 L549.0 231.3 L550.0 233.2 L551.0 235.5 L552.0 238.1 L553.0 241.1 L554.0 244.3 L555.0 247.9 L556.0 251.7 L557.0 255.8 L558.0 260.1 L559.0 264.7 L560.0 269.4 L561.0 274.2 L562.0 279.3 L563.0 284.4 L564.0 289.6 L565.0 294.9 L566.0 300.3 L567.0 305.7 L568.0 311.1 L569.0 316.5 L570.0 322.0 L571.0 327.5 L572.0 332.9 L573.0 338.4 L574.0 343.8 L575.0 349.3 L576.0 354.8 L577.0 360.4 L578.0 365.9 L579.0 371.5 L580.0 377.2 L581.0 382.9 L582.0 388.7 L583.0 394.5 L584.0 400.4 L585.0 406.3 L586.0 412.2 L587.0 418.1 L588.0 424.0 L589.0 429.8 L590.0 435.5 L591.0 441.0 L592.0 446.4 L593.0 451.5 L594.0 456.4 L595.0 460.9 L596.0 465.0 L597.0 468.6 L598.0 471.9 L599.0 474.5 L600.0 476.7 L601.0 478.3 L602.0 479.2 L603.0 479.6 L604.0 479.4 L605.0 478.5 L606.0 477.0 L607.0 475.0 L608.0 472.4 L609.0 469.3 L610.0 465.7 L611.0 461.7 L612.0 457.3 L613.0 452.5 L614.0 447.5 L615.0 442.1 L616.0 436.6 L617.0 430.9 L618.0 425.2 L619.0 419.3 L620.0 413.4 L621.0 407.5 L622.0 401.6 L623.0 395.7 L624.0 389.8 L625.0 384.1 L626.0 378.3 L627.0 372.7 L628.0 367.0 L629.0 361.5 L630.0 355.9 L631.0 350.4 L632.0 344.9 L633.0 339.5 L634.0 334.0 L635.0 328.5 L636.0 323.1 L637.0 317.6 L638.0 312.2 L639.0 306.8 L640.0 301.4 L641.0 296.0 L642.0 290.7 L643.0 285.4 L644.0 280.3 L645.0 275.2 L646.0 270.3 L647.0 265.6 L648.0 261.0 L649.0 256.7 L650.0 252.5 L651.0 248.6 L652.0 245.0 L653.0 241.7 L654.0 238.7 L655.0 236.0 L656.0 233.6 L657.0 231.6 L658.0 230.0 L659.0 228.7 L660.0 227.8 L661.0 227.3 L662.0 227.1 L663.0 227.3 L664.0 227.9 L665.0 228.9 L666.0 230.3 L667.0 232.0 L668.0 234.1 L669.0 236.5 L670.0 239.3 L671.0 242.3 L672.0 245.7 L673.0 249.4 L674.0 253.3 L675.0 257.5 L676.0 261.9 L677.0 266.5 L678.0 271.3 L679.0 276.2 L680.0 281.3 L681.0 286.5 L682.0 291.7 L683.0 297.1 L684.0 302.4 L685.0 307.8 L686.0 313.3 L687.0 318.7 L688.0 324.2 L689.0 329.6 L690.0 335.1 L691.0 340.6 L692.0 346.0 L693.0 351.5 L694.0 357.0 L695.0 362.6 L696.0 368.2 L697.0 373.8 L698.0 379.5 L699.0 385.2 L700.0 391.0 L701.0 396.9 L702.0 402.7 L703.0 408.6 L704.0 414.6 L705.0 420.5 L706.0 426.3 L707.0 432.1 L708.0 437.7 L709.0 443.2 L710.0 448.5 L711.0 453.5 L712.0 458.2 L713.0 462.6 L714.0 466.5 L715.0 470.0 L716.0 473.0 L717.0 475.5 L718.0 477.4 L719.0 478.7 L720.0 479.4 L721.0 479.6 L722.0 479.1 L723.0 478.0 L724.0 476.3 L725.0 474.0 L726.0 471.3 L727.0 468.0 L728.0 464.2 L729.0 460.0 L730.0 455.4 L731.0 450.5 L732.0 445.4 L733.0 439.9 L734.0 434.4 L735.0 428.6 L736.0 422.8 L737.0 416.9 L738.0 411.0 L739.0 405.1 L740.0 399.2 L741.0 393.3 L742.0 387.5 L743.0 381.8 L744.0 376.1 L745.0 370.4 L746.0 364.8 L747.0 359.2 L748.0 353.7 L749.0 348.2 L750.0 342.7 L751.0 337.3 L752.0 331.8 L753.0 326.4 L754.0 320.9 L755.0 315.5 L756.0 310.0 L757.0 304.6 L758.0 299.2 L759.0 293.9 L760.0 288.6 L761.0 283.4 L762.0 278.2 L763.0 273.3 L764.0 268.4 L765.0 263.7 L766.0 259.2 L767.0 255.0 L768.0 250.9 L769.0 247.2 L770.0 243.7 L771.0 240.5 L772.0 237.6 L773.0 235.0 L774.0 232.8 L775.0 230.9 L776.0 229.4 L777.0 228.3 L778.0 227.5 L779.0 227.1 L780.0 227.1 L781.0 227.5 L782.0 228.3 L783.0 229.4 L784.0 230.9 L785.0 232.8 L786.0 235.0 L787.0 237.6 L788.0 240.5 L789.0 243.7 L790.0 247.2 L791.0 250.9 L792.0 255.0 L793.0 259.2 L794.0 263.7 L795.0 268.4 L796.0 273.3 L797.0 278.2 L798.0 283.4 L799.0 288.6 L800.0 293.9 L801.0 299.2 L802.0 304.6 L803.0 310.0 L804.0 315.5 L805.0 320.9 L806.0 326.4 L807.0 331.8 L808.0 337.3 L809.0 342.7 L810.0 348.2 L811.0 353.7 L812.0 359.2 L813.0 364.8 L814.0 370.4 L815.0 376.1 L816.0 381.8 L817.0 387.5 L818.0 393.3 L819.0 399.2 L820.0 405.1 L821.0 411.0 L822.0 416.9 L823.0 422.8 L824.0 428.6 L825.0 434.4 L826.0 439.9 L827.0 445.4 L828.0 450.5 L829.0 455.4 L830.0 460.0 L831.0 464.2 L832.0 468.0 L833.0 471.3 L834.0 474.0 L835.0 476.3 L836.0 478.0 L837.0 479.1 L838.0 479.6 L839.0 479.4 L840.0 478.7 L841.0 477.4 L842.0 475.5 L843.0 473.0 L844.0 470.0 L845.0 466.5 L846.0 462.6 L847.0 458.2 L848.0 453.5 L849.0 448.5 L850.0 443.2 L851.0 437.7 L852.0 432.1 L853.0 426.3 L854.0 420.5 L855.0 414.6 L856.0 408.6 L857.0 402.7 L858.0 396.9 L859.0 391.0 L860.0 385.2 L861.0 379.5 L862.0 373.8 L863.0 368.2 L864.0 362.6 L865.0 357.0 L866.0 351.5 L867.0 346.0 L868.0 340.6 L869.0 335.1 L870.0 329.6 L871.0 324.2 L872.0 318.7 L873.0 313.3 L874.0 307.8 L875.0 302.4 L876.0 297.1 L877.0 291.7 L878.0 286.5 L879.0 281.3 L880.0 276.2 L881.0 271.3 L882.0 266.5 L883.0 261.9 L884.0 257.5 L885.0 253.3 L886.0 249.4 L887.0 245.7 L888.0 242.3 L889.0 239.3 L890.0 236.5 L891.0 234.1 L892.0 232.0 L893.0 230.3 L894.0 228.9 L895.0 227.9 L896.0 227.3 L897.0 227.1 L898.0 227.3 L899.0 227.8 L900.0 228.7 L901.0 230.0 L902.0 231.6 L903.0 233.6 L904.0 236.0 L905.0 238.7 L906.0 241.7 L907.0 245.0 L908.0 248.6 L909.0 252.5 L910.0 256.7 L911.0 261.0 L912.0 265.6 L913.0 270.3 L914.0 275.2 L915.0 280.3 L916.0 285.4 L917.0 290.7 L918.0 296.0 L919.0 301.4 L920.0 306.8 L921.0 312.2 L922.0 317.6 L923.0 323.1 L924.0 328.5 L925.0 334.0 L926.0 339.5 L927.0 344.9 L928.0 350.4 L929.0 355.9 L930.0 361.5 L931.0 367.0 L932.0 372.7 L933.0 378.3 L934.0 384.1 L935.0 389.8 L936.0 395.7 L937.0 401.6 L938.0 407.5 L939.0 413.4 L940.0 419.3 L941.0 425.2 L942.0 430.9 L943.0 436.6 L944.0 442.1 L945.0 447.5 L946.0 452.5 L947.0 457.3 L948.0 461.7 L949.0 465.7 L950.0 469.3 L951.0 472.4 L952.0 475.0 L953.0 477.0 L954.0 478.5 L955.0 479.4 L956.0 479.6 L957.0 479.2 L958.0 478.3 L959.0 476.7 L960.0 474.5 L961.0 471.9 L962.0 468.6 L963.0 465.0 L964.0 460.9 L965.0 456.4 L966.0 451.5 L967.0 446.4 L968.0 441.0 L969.0 435.5 L970.0 429.8 L971.0 424.0 L972.0 418.1 L973.0 412.2 L974.0 406.3 L975.0 400.4 L976.0 394.5 L977.0 388.7 L978.0 382.9 L979.0 377.2 L980.0 371.5 L981.0 365.9 L982.0 360.4 L983.0 354.8 L984.0 349.3" fill="none" stroke="#2468e6" stroke-width="2.2" stroke-linejoin="round"/>
<path d="M84.0 247.5 L85.0 251.2 L86.0 255.1 L87.0 259.3 L88.0 263.7 L89.0 268.3 L90.0 273.1 L91.0 278.0 L92.0 283.1 L93.0 288.3 L94.0 293.5 L95.0 298.9 L96.0 304.2 L97.0 309.6 L98.0 315.1 L99.0 320.5 L100.0 326.0 L101.0 331.4 L102.0 336.9 L103.0 342.4 L104.0 347.8 L105.0 353.3 L106.0 358.8 L107.0 364.4 L108.0 370.0 L109.0 375.6 L110.0 381.3 L111.0 387.0 L112.0 392.8 L113.0 398.7 L114.0 404.5 L115.0 410.4 L116.0 416.4 L117.0 422.3 L118.0 428.1 L119.0 433.9 L120.0 439.5 L121.0 445.0 L122.0 450.3 L123.0 455.3 L124.0 460.0 L125.0 464.4 L126.0 468.3 L127.0 471.8 L128.0 474.8 L129.0 477.3 L130.0 479.2 L131.0 480.5 L132.0 481.2 L133.0 481.4 L134.0 480.9 L135.0 479.8 L136.0 478.1 L137.0 475.8 L138.0 473.1 L139.0 469.8 L140.0 466.0 L141.0 461.8 L142.0 457.2 L143.0 452.3 L144.0 447.2 L145.0 441.7 L146.0 436.2 L147.0 430.4 L148.0 424.6 L149.0 418.7 L150.0 412.8 L151.0 406.9 L152.0 401.0 L153.0 395.1 L154.0 389.3 L155.0 383.6 L156.0 377.9 L157.0 372.2 L158.0 366.6 L159.0 361.0 L160.0 355.5 L161.0 350.0 L162.0 344.5 L163.0 339.1 L164.0 333.6 L165.0 328.2 L166.0 322.7 L167.0 317.3 L168.0 311.8 L169.0 306.4 L170.0 301.0 L171.0 295.7 L172.0 290.4 L173.0 285.2 L174.0 280.0 L175.0 275.1 L176.0 270.2 L177.0 265.5 L178.0 261.0 L179.0 256.8 L180.0 252.7 L181.0 249.0 L182.0 245.5 L183.0 242.3 L184.0 239.4 L185.0 236.8 L186.0 234.6 L187.0 232.7 L188.0 231.2 L189.0 230.1 L190.0 229.3 L191.0 228.9 L192.0 228.9 L193.0 229.3 L194.0 230.1 L195.0 231.2 L196.0 232.7 L197.0 234.6 L198.0 236.8 L199.0 239.4 L200.0 242.3 L201.0 245.5 L202.0 249.0 L203.0 252.7 L204.0 256.8 L205.0 261.0 L206.0 265.5 L207.0 270.2 L208.0 275.1 L209.0 280.0 L210.0 285.2 L211.0 290.4 L212.0 295.7 L213.0 301.0 L214.0 306.4 L215.0 311.8 L216.0 317.3 L217.0 322.7 L218.0 328.2 L219.0 333.6 L220.0 339.1 L221.0 344.5 L222.0 350.0 L223.0 355.5 L224.0 361.0 L225.0 366.6 L226.0 372.2 L227.0 377.9 L228.0 383.6 L229.0 389.3 L230.0 395.1 L231.0 401.0 L232.0 406.9 L233.0 412.8 L234.0 418.7 L235.0 424.6 L236.0 430.4 L237.0 436.2 L238.0 441.7 L239.0 447.2 L240.0 452.3 L241.0 457.2 L242.0 461.8 L243.0 466.0 L244.0 469.8 L245.0 473.1 L246.0 475.8 L247.0 478.1 L248.0 479.8 L249.0 480.9 L250.0 481.4 L251.0 481.2 L252.0 480.5 L253.0 479.2 L254.0 477.3 L255.0 474.8 L256.0 471.8 L257.0 468.3 L258.0 464.4 L259.0 460.0 L260.0 455.3 L261.0 450.3 L262.0 445.0 L263.0 439.5 L264.0 433.9 L265.0 428.1 L266.0 422.3 L267.0 416.4 L268.0 410.4 L269.0 404.5 L270.0 398.7 L271.0 392.8 L272.0 387.0 L273.0 381.3 L274.0 375.6 L275.0 370.0 L276.0 364.4 L277.0 358.8 L278.0 353.3 L279.0 347.8 L280.0 342.4 L281.0 336.9 L282.0 331.4 L283.0 326.0 L284.0 320.5 L285.0 315.1 L286.0 309.6 L287.0 304.2 L288.0 298.9 L289.0 293.5 L290.0 288.3 L291.0 283.1 L292.0 278.0 L293.0 273.1 L294.0 268.3 L295.0 263.7 L296.0 259.3 L297.0 255.1 L298.0 251.2 L299.0 247.5 L300.0 244.1 L301.0 241.1 L302.0 238.3 L303.0 235.9 L304.0 233.8 L305.0 232.1 L306.0 230.7 L307.0 229.7 L308.0 229.1 L309.0 228.9 L310.0 229.1 L311.0 229.6 L312.0 230.5 L313.0 231.8 L314.0 233.4 L315.0 235.4 L316.0 237.8 L317.0 240.5 L318.0 243.5 L319.0 246.8 L320.0 250.4 L321.0 254.3 L322.0 258.5 L323.0 262.8 L324.0 267.4 L325.0 272.1 L326.0 277.0 L327.0 282.1 L328.0 287.2 L329.0 292.5 L330.0 297.8 L331.0 303.2 L332.0 308.6 L333.0 314.0 L334.0 319.4 L335.0 324.9 L336.0 330.3 L337.0 335.8 L338.0 341.3 L339.0 346.7 L340.0 352.2 L341.0 357.7 L342.0 363.3 L343.0 368.8 L344.0 374.5 L345.0 380.1 L346.0 385.9 L347.0 391.6 L348.0 397.5 L349.0 403.4 L350.0 409.3 L351.0 415.2 L352.0 421.1 L353.0 427.0 L354.0 432.7 L355.0 438.4 L356.0 443.9 L357.0 449.3 L358.0 454.3 L359.0 459.1 L360.0 463.5 L361.0 467.5 L362.0 471.1 L363.0 474.2 L364.0 476.8 L365.0 478.8 L366.0 480.3 L367.0 481.2 L368.0 481.4 L369.0 481.0 L370.0 480.1 L371.0 478.5 L372.0 476.3 L373.0 473.7 L374.0 470.4 L375.0 466.8 L376.0 462.7 L377.0 458.2 L378.0 453.3 L379.0 448.2 L380.0 442.8 L381.0 437.3 L382.0 431.6 L383.0 425.8 L384.0 419.9 L385.0 414.0 L386.0 408.1 L387.0 402.2 L388.0 396.3 L389.0 390.5 L390.0 384.7 L391.0 379.0 L392.0 373.3 L393.0 367.7 L394.0 362.2 L395.0 356.6 L396.0 351.1 L397.0 345.6 L398.0 340.2 L399.0 334.7 L400.0 329.3 L401.0 323.8 L402.0 318.3 L403.0 312.9 L404.0 307.5 L405.0 302.1 L406.0 296.7 L407.0 291.4 L408.0 286.2 L409.0 281.1 L410.0 276.0 L411.0 271.2 L412.0 266.5 L413.0 261.9 L414.0 257.6 L415.0 253.5 L416.0 249.7 L417.0 246.1 L418.0 242.9 L419.0 239.9 L420.0 237.3 L421.0 235.0 L422.0 233.1 L423.0 231.5 L424.0 230.3 L425.0 229.4 L426.0 229.0 L427.0 228.9 L428.0 229.2 L429.0 229.9 L430.0 231.0 L431.0 232.4 L432.0 234.2 L433.0 236.3 L434.0 238.8 L435.0 241.7 L436.0 244.8 L437.0 248.2 L438.0 252.0 L439.0 255.9 L440.0 260.2 L441.0 264.6 L442.0 269.3 L443.0 274.1 L444.0 279.0 L445.0 284.1 L446.0 289.3 L447.0 294.6 L448.0 299.9 L449.0 305.3 L450.0 310.7 L451.0 316.2 L452.0 321.6 L453.0 327.1 L454.0 332.5 L455.0 338.0 L456.0 343.4 L457.0 348.9 L458.0 354.4 L459.0 359.9 L460.0 365.5 L461.0 371.1 L462.0 376.7 L463.0 382.4 L464.0 388.2 L465.0 394.0 L466.0 399.8 L467.0 405.7 L468.0 411.6 L469.0 417.5 L470.0 423.4 L471.0 429.3 L472.0 435.0 L473.0 440.6 L474.0 446.1 L475.0 451.3 L476.0 456.3 L477.0 460.9 L478.0 465.2 L479.0 469.0 L480.0 472.4 L481.0 475.3 L482.0 477.7 L483.0 479.5 L484.0 480.7 L485.0 481.3 L486.0 481.3 L487.0 480.7 L488.0 479.5 L489.0 477.7 L490.0 475.3 L491.0 472.4 L492.0 469.0 L493.0 465.2 L494.0 460.9 L495.0 456.3 L496.0 451.3 L497.0 446.1 L498.0 440.6 L499.0 435.0 L500.0 429.3 L501.0 423.4 L502.0 417.5 L503.0 411.6 L504.0 405.7 L505.0 399.8 L506.0 394.0 L507.0 388.2 L508.0 382.4 L509.0 376.7 L510.0 371.1 L511.0 365.5 L512.0 359.9 L513.0 354.4 L514.0 348.9 L515.0 343.4 L516.0 338.0 L517.0 332.5 L518.0 327.1 L519.0 321.6 L520.0 316.2 L521.0 310.7 L522.0 305.3 L523.0 299.9 L524.0 294.6 L525.0 289.3 L526.0 284.1 L527.0 279.0 L528.0 274.1 L529.0 269.3 L530.0 264.6 L531.0 260.2 L532.0 255.9 L533.0 252.0 L534.0 248.2 L535.0 244.8 L536.0 241.7 L537.0 238.8 L538.0 236.3 L539.0 234.2 L540.0 232.4 L541.0 231.0 L542.0 229.9 L543.0 229.2 L544.0 228.9 L545.0 229.0 L546.0 229.4 L547.0 230.3 L548.0 231.5 L549.0 233.1 L550.0 235.0 L551.0 237.3 L552.0 239.9 L553.0 242.9 L554.0 246.1 L555.0 249.7 L556.0 253.5 L557.0 257.6 L558.0 261.9 L559.0 266.5 L560.0 271.2 L561.0 276.0 L562.0 281.1 L563.0 286.2 L564.0 291.4 L565.0 296.7 L566.0 302.1 L567.0 307.5 L568.0 312.9 L569.0 318.3 L570.0 323.8 L571.0 329.3 L572.0 334.7 L573.0 340.2 L574.0 345.6 L575.0 351.1 L576.0 356.6 L577.0 362.2 L578.0 367.7 L579.0 373.3 L580.0 379.0 L581.0 384.7 L582.0 390.5 L583.0 396.3 L584.0 402.2 L585.0 408.1 L586.0 414.0 L587.0 419.9 L588.0 425.8 L589.0 431.6 L590.0 437.3 L591.0 442.8 L592.0 448.2 L593.0 453.3 L594.0 458.2 L595.0 462.7 L596.0 466.8 L597.0 470.4 L598.0 473.7 L599.0 476.3 L600.0 478.5 L601.0 480.1 L602.0 481.0 L603.0 481.4 L604.0 481.2 L605.0 480.3 L606.0 478.8 L607.0 476.8 L608.0 474.2 L609.0 471.1 L610.0 467.5 L611.0 463.5 L612.0 459.1 L613.0 454.3 L614.0 449.3 L615.0 443.9 L616.0 438.4 L617.0 432.7 L618.0 427.0 L619.0 421.1 L620.0 415.2 L621.0 409.3 L622.0 403.4 L623.0 397.5 L624.0 391.6 L625.0 385.9 L626.0 380.1 L627.0 374.5 L628.0 368.8 L629.0 363.3 L630.0 357.7 L631.0 352.2 L632.0 346.7 L633.0 341.3 L634.0 335.8 L635.0 330.3 L636.0 324.9 L637.0 319.4 L638.0 314.0 L639.0 308.6 L640.0 303.2 L641.0 297.8 L642.0 292.5 L643.0 287.2 L644.0 282.1 L645.0 277.0 L646.0 272.1 L647.0 267.4 L648.0 262.8 L649.0 258.5 L650.0 254.3 L651.0 250.4 L652.0 246.8 L653.0 243.5 L654.0 240.5 L655.0 237.8 L656.0 235.4 L657.0 233.4 L658.0 231.8 L659.0 230.5 L660.0 229.6 L661.0 229.1 L662.0 228.9 L663.0 229.1 L664.0 229.7 L665.0 230.7 L666.0 232.1 L667.0 233.8 L668.0 235.9 L669.0 238.3 L670.0 241.1 L671.0 244.1 L672.0 247.5 L673.0 251.2 L674.0 255.1 L675.0 259.3 L676.0 263.7 L677.0 268.3 L678.0 273.1 L679.0 278.0 L680.0 283.1 L681.0 288.3 L682.0 293.5 L683.0 298.9 L684.0 304.2 L685.0 309.6 L686.0 315.1 L687.0 320.5 L688.0 326.0 L689.0 331.4 L690.0 336.9 L691.0 342.4 L692.0 347.8 L693.0 353.3 L694.0 358.8 L695.0 364.4 L696.0 370.0 L697.0 375.6 L698.0 381.3 L699.0 387.0 L700.0 392.8 L701.0 398.7 L702.0 404.5 L703.0 410.4 L704.0 416.4 L705.0 422.3 L706.0 428.1 L707.0 433.9 L708.0 439.5 L709.0 445.0 L710.0 450.3 L711.0 455.3 L712.0 460.0 L713.0 464.4 L714.0 468.3 L715.0 471.8 L716.0 474.8 L717.0 477.3 L718.0 479.2 L719.0 480.5 L720.0 481.2 L721.0 481.4 L722.0 480.9 L723.0 479.8 L724.0 478.1 L725.0 475.8 L726.0 473.1 L727.0 469.8 L728.0 466.0 L729.0 461.8 L730.0 457.2 L731.0 452.3 L732.0 447.2 L733.0 441.7 L734.0 436.2 L735.0 430.4 L736.0 424.6 L737.0 418.7 L738.0 412.8 L739.0 406.9 L740.0 401.0 L741.0 395.1 L742.0 389.3 L743.0 383.6 L744.0 377.9 L745.0 372.2 L746.0 366.6 L747.0 361.0 L748.0 355.5 L749.0 350.0 L750.0 344.5 L751.0 339.1 L752.0 333.6 L753.0 328.2 L754.0 322.7 L755.0 317.3 L756.0 311.8 L757.0 306.4 L758.0 301.0 L759.0 295.7 L760.0 290.4 L761.0 285.2 L762.0 280.0 L763.0 275.1 L764.0 270.2 L765.0 265.5 L766.0 261.0 L767.0 256.8 L768.0 252.7 L769.0 249.0 L770.0 245.5 L771.0 242.3 L772.0 239.4 L773.0 236.8 L774.0 234.6 L775.0 232.7 L776.0 231.2 L777.0 230.1 L778.0 229.3 L779.0 228.9 L780.0 228.9 L781.0 229.3 L782.0 230.1 L783.0 231.2 L784.0 232.7 L785.0 234.6 L786.0 236.8 L787.0 239.4 L788.0 242.3 L789.0 245.5 L790.0 249.0 L791.0 252.7 L792.0 256.8 L793.0 261.0 L794.0 265.5 L795.0 270.2 L796.0 275.1 L797.0 280.0 L798.0 285.2 L799.0 290.4 L800.0 295.7 L801.0 301.0 L802.0 306.4 L803.0 311.8 L804.0 317.3 L805.0 322.7 L806.0 328.2 L807.0 333.6 L808.0 339.1 L809.0 344.5 L810.0 350.0 L811.0 355.5 L812.0 361.0 L813.0 366.6 L814.0 372.2 L815.0 377.9 L816.0 383.6 L817.0 389.3 L818.0 395.1 L819.0 401.0 L820.0 406.9 L821.0 412.8 L822.0 418.7 L823.0 424.6 L824.0 430.4 L825.0 436.2 L826.0 441.7 L827.0 447.2 L828.0 452.3 L829.0 457.2 L830.0 461.8 L831.0 466.0 L832.0 469.8 L833.0 473.1 L834.0 475.8 L835.0 478.1 L836.0 479.8 L837.0 480.9 L838.0 481.4 L839.0 481.2 L840.0 480.5 L841.0 479.2 L842.0 477.3 L843.0 474.8 L844.0 471.8 L845.0 468.3 L846.0 464.4 L847.0 460.0 L848.0 455.3 L849.0 450.3 L850.0 445.0 L851.0 439.5 L852.0 433.9 L853.0 428.1 L854.0 422.3 L855.0 416.4 L856.0 410.4 L857.0 404.5 L858.0 398.7 L859.0 392.8 L860.0 387.0 L861.0 381.3 L862.0 375.6 L863.0 370.0 L864.0 364.4 L865.0 358.8 L866.0 353.3 L867.0 347.8 L868.0 342.4 L869.0 336.9 L870.0 331.4 L871.0 326.0 L872.0 320.5 L873.0 315.1 L874.0 309.6 L875.0 304.2 L876.0 298.9 L877.0 293.5 L878.0 288.3 L879.0 283.1 L880.0 278.0 L881.0 273.1 L882.0 268.3 L883.0 263.7 L884.0 259.3 L885.0 255.1 L886.0 251.2 L887.0 247.5 L888.0 244.1 L889.0 241.1 L890.0 238.3 L891.0 235.9 L892.0 233.8 L893.0 232.1 L894.0 230.7 L895.0 229.7 L896.0 229.1 L897.0 228.9 L898.0 229.1 L899.0 229.6 L900.0 230.5 L901.0 231.8 L902.0 233.4 L903.0 235.4 L904.0 237.8 L905.0 240.5 L906.0 243.5 L907.0 246.8 L908.0 250.4 L909.0 254.3 L910.0 258.5 L911.0 262.8 L912.0 267.4 L913.0 272.1 L914.0 277.0 L915.0 282.1 L916.0 287.2 L917.0 292.5 L918.0 297.8 L919.0 303.2 L920.0 308.6 L921.0 314.0 L922.0 319.4 L923.0 324.9 L924.0 330.3 L925.0 335.8 L926.0 341.3 L927.0 346.7 L928.0 352.2 L929.0 357.7 L930.0 363.3 L931.0 368.8 L932.0 374.5 L933.0 380.1 L934.0 385.9 L935.0 391.6 L936.0 397.5 L937.0 403.4 L938.0 409.3 L939.0 415.2 L940.0 421.1 L941.0 427.0 L942.0 432.7 L943.0 438.4 L944.0 443.9 L945.0 449.3 L946.0 454.3 L947.0 459.1 L948.0 463.5 L949.0 467.5 L950.0 471.1 L951.0 474.2 L952.0 476.8 L953.0 478.8 L954.0 480.3 L955.0 481.2 L956.0 481.4 L957.0 481.0 L958.0 480.1 L959.0 478.5 L960.0 476.3 L961.0 473.7 L962.0 470.4 L963.0 466.8 L964.0 462.7 L965.0 458.2 L966.0 453.3 L967.0 448.2 L968.0 442.8 L969.0 437.3 L970.0 431.6 L971.0 425.8 L972.0 419.9 L973.0 414.0 L974.0 408.1 L975.0 402.2 L976.0 396.3 L977.0 390.5 L978.0 384.7 L979.0 379.0 L980.0 373.3 L981.0 367.7 L982.0 362.2 L983.0 356.6 L984.0 351.1" fill="none" stroke="#2468e6" stroke-width="2.2" stroke-linejoin="round"/>
<path d="M188.2 228 L191.5 223.4 L194.8 228" fill="none" stroke="#1b4db0" stroke-width="1.4"/>
<path d="M305.8 228 L309.1 223.4 L312.4 228" fill="none" stroke="#1b4db0" stroke-width="1.4"/>
<path d="M423.4 228 L426.7 223.4 L430.0 228" fill="none" stroke="#1b4db0" stroke-width="1.4"/>
<path d="M540.1 228 L544.3 218.6 L548.5 228" fill="none" stroke="#1b4db0" stroke-width="1.4"/>
<path d="M658.6 228 L661.9 223.4 L665.2 228" fill="none" stroke="#1b4db0" stroke-width="1.4"/>
<path d="M776.2 228 L779.5 223.4 L782.8 228" fill="none" stroke="#1b4db0" stroke-width="1.4"/>
<path d="M893.8 228 L897.1 223.4 L900.4 228" fill="none" stroke="#1b4db0" stroke-width="1.4"/>
<path d="M128.9 480.500 L132.7 485.200 L136.5 480.500" fill="none" stroke="#1b4db0" stroke-width="1.4"/>
<path d="M246.5 480.500 L250.3 485.200 L254.1 480.500" fill="none" stroke="#1b4db0" stroke-width="1.4"/>
<path d="M364.1 480.500 L367.9 485.200 L371.7 480.500" fill="none" stroke="#1b4db0" stroke-width="1.4"/>
<path d="M481.7 480.500 L485.5 485.200 L489.3 480.500" fill="none" stroke="#1b4db0" stroke-width="1.4"/>
<path d="M599.3 480.500 L603.1 485.200 L606.9 480.500" fill="none" stroke="#1b4db0" stroke-width="1.4"/>
<path d="M716.9 480.500 L720.7 485.200 L724.5 480.500" fill="none" stroke="#1b4db0" stroke-width="1.4"/>
<path d="M834.5 480.500 L838.3 485.200 L842.1 480.500" fill="none" stroke="#1b4db0" stroke-width="1.4"/>
<path d="M952.1 480.500 L955.9 485.200 L959.7 480.500" fill="none" stroke="#1b4db0" stroke-width="1.4"/>

</g>
<g fill="#2068f0" stroke="none">
<polygon points="988,352.5 993,348 993,357"/>
<rect x="993" y="351.8" width="5" height="1.4"/>
<rect x="996.7" y="351.8" width="1.4" height="10"/>
<rect x="994" y="361" width="7" height="1.2"/>
<rect x="995" y="363" width="5" height="1.2"/>
<rect x="996" y="365" width="3" height="1.2"/>
<text x="999.8" y="360" font-family="Liberation Sans" font-size="12.5">3</text>
<text x="1005.8" y="355" font-family="Liberation Sans" font-weight="bold" font-size="11.5">T</text>
</g>
<polygon points="272.800,108 282.400,108 277.600,113.200" fill="#ff8c00"/>
<polygon points="272.800,605 282.400,605 277.600,599.800" fill="#ff8c00"/>
</svg>

<!-- toolbar / tabs / status -->
<div id="toolbar" class="abs"></div><div id="wstrip" class="abs"></div>
<div id="status" class="abs"></div>
<div class="st or" style="left:82.5px;top:676.7px">Acquisition:</div>
<div class="st" style="left:82px;top:694.9px">Sampling Mode  Real Time</div>
<div class="st" style="left:82px;top:713.0px">Capture Time   50.0 ns</div>
<div class="st" style="left:82px;top:731.2px">Effective Res  3.13 ps/pt</div>
<div class="st" style="left:82px;top:749.3px">Bits Of Res    8 bits</div>
<div class="st or" style="left:649px;top:676.7px">Trigger:</div>
<div class="st" style="left:649px;top:694.9px">Mode         Edge (<svg width="9" height="13" style="vertical-align:-1px"><path d="M4.500 1.500 V12 M1 5 L4.500 1.200 L8 5" fill="none" stroke="#f0f0f0" stroke-width="1.700"/></svg>)</div>
<div class="st" style="left:649px;top:731.2px">InfiniiScan  Off</div>

<div class="sunk" style="left:81px;top:616px;width:14px;height:17px"><svg width="14" height="17" style="position:absolute;left:-1px;top:-1px"><path d="M7.500 3.500 v11 M5 6 l2.500 -2.800 l2.500 2.800" fill="none" stroke="#000" stroke-width="1.150"/></svg></div>
<div class="tb" style="left:103px;top:615px;width:25px;height:12px"><svg width="25" height="12"><path d="M8.4 5.8 l3 -3 l3 3 M8.4 8.4 l3 -3 l3 3" fill="none" stroke="#222" stroke-width="1.100"/></svg></div>
<div class="tb" style="left:103px;top:630px;width:25px;height:12px"><svg width="25" height="12"><path d="M8.4 2.5 l3 3 l3 -3 M8.4 5.1 l3 3 l3 -3" fill="none" stroke="#222" stroke-width="1.100"/></svg></div>
<div class="tb" style="left:131px;top:615px;width:18px;height:27px"><svg width="18" height="27"><path d="M4.6 6.0 l3 -3 l3 3 M4.6 8.6 l3 -3 l3 3" fill="none" stroke="#222" stroke-width="1.100"/><path d="M4.6 15.8 l3 3 l3 -3 M4.6 18.4 l3 3 l3 -3" fill="none" stroke="#222" stroke-width="1.100"/></svg></div>
<div class="tb" style="left:167px;top:615px;width:25px;height:27px;border-color:#2c628b;background:linear-gradient(180deg,#e6f5fd 0,#c4e5f6 49%,#98d1ef 51%,#68b3db 100%);box-shadow:inset 0 0 0 1px rgba(255,255,255,.35)"><svg width="25" height="27"><polygon points="19.4,15.9 15.1,20.2 9.1,20.2 4.8,15.9 4.8,9.9 9.1,5.6 15.1,5.6 19.4,9.9" fill="#00a9a9" stroke="#000" stroke-width="1"/></svg></div>
<div class="tb" style="left:194px;top:615px;width:25px;height:27px"><svg width="25" height="27"><polygon points="18.5,15.9 14.2,20.2 8.2,20.2 3.9,15.9 3.9,9.9 8.2,5.6 14.2,5.6 18.5,9.9" fill="#ff0000" stroke="#000" stroke-width="1"/></svg></div>
<div class="tb" style="left:221px;top:615px;width:25px;height:27px"><svg width="25" height="27"><polygon points="18.5,15.9 14.2,20.2 8.2,20.2 3.9,15.9 3.9,9.9 8.2,5.6 14.2,5.6 18.5,9.9" fill="#ffff00" stroke="#000" stroke-width="1"/></svg></div>
<div class="tb" style="left:260px;top:615px;width:25px;height:27px"><svg width="25" height="27">
<rect x="1.800" y="3.500" width="18.600" height="16.300" fill="#fff" stroke="#000" stroke-width="1.400"/>
<polygon points="19.800,10 19.800,19.200 10,19.200" fill="#707070"/>
<path d="M3.800 10 q5 -5.500 10.500 0.500" fill="none" stroke="#000" stroke-width="1.300"/>
<polygon points="16.500,7.500 16.500,13 11,12.500" fill="#000"/>
</svg></div>
<div class="tb" style="left:287px;top:615px;width:25px;height:27px"><svg width="25" height="27">
<polygon points="2.500,13.500 11,9 21,11.500 21,17.500 12,22 2.500,18.500" fill="#6a6a6a"/>
<polygon points="2.500,12.500 11,8 21,10.500 12,15" fill="#b8b8b8"/>
<polygon points="9.500,8 13.500,4.500 19,6 17,10" fill="#fff" stroke="#666" stroke-width=".6"/>
<path d="M2.500 16 l9.500 3.500 l9 -4.500 M2.500 18.500 l9.500 3.500 l9 -4.500" stroke="#222" stroke-width="1.100" fill="none"/>
<path d="M15 9.500 q1 -2.500 5 -2.500" stroke="#222" stroke-width="1" fill="none"/>
<rect x="6.500" y="11" width="2" height="1.500" fill="#00d030"/><rect x="9" y="12" width="2" height="1.500" fill="#f02020"/>
</svg></div>
<div class="tb" style="left:314px;top:615px;width:25px;height:27px"><svg width="25" height="27"><line x1="17.0" y1="12.5" x2="21.3" y2="12.5" stroke="#000" stroke-width="1.100"/><line x1="16.0" y1="17.0" x2="19.5" y2="20.5" stroke="#000" stroke-width="1.100"/><line x1="11.5" y1="18.0" x2="11.5" y2="22.3" stroke="#000" stroke-width="1.100"/><line x1="7.0" y1="17.0" x2="3.5" y2="20.5" stroke="#000" stroke-width="1.100"/><line x1="6.0" y1="12.5" x2="1.7" y2="12.5" stroke="#000" stroke-width="1.100"/><line x1="7.0" y1="8.0" x2="3.5" y2="4.5" stroke="#000" stroke-width="1.100"/><line x1="11.5" y1="7.0" x2="11.5" y2="2.7" stroke="#000" stroke-width="1.100"/><line x1="16.0" y1="8.0" x2="19.5" y2="4.5" stroke="#000" stroke-width="1.100"/><circle cx="11.5" cy="12.5" r="4" fill="#ffff00" stroke="#000" stroke-width="1"/></svg></div>
<div class="tb" style="left:353px;top:615px;width:25px;height:27px;background:#f4f4f4"><div style="position:absolute;left:2px;top:2px;width:19px;height:21px;background:#000;color:#fff;font-size:20px;line-height:20px;text-align:center;-webkit-text-stroke:0.4px #fff">H</div></div>
<div class="fld" style="left:380px;top:614px;width:100px;height:31px"><span style="position:absolute;left:6px;top:1.700px;letter-spacing:-0.35px">1.00 ns/</span></div>
<div class="tb" style="left:482px;top:614px;width:19px;height:30px"><svg width="19" height="30"><path d="M5.500 15 C5.500 8 9 8 9 14.500 C9 21 12.500 21 12.500 14" fill="none" stroke="#000" stroke-width="1.100"/></svg></div>
<div class="tb" style="left:503px;top:614px;width:19px;height:30px"><svg width="19" height="30"><path d="M2.500 15 C3 8.500 8.500 8.500 9.500 14.500 C10.500 20.500 16 20.500 16.500 14" fill="none" stroke="#000" stroke-width="1.100"/></svg></div>
<div class="abs" style="left:527px;top:616px;width:14px;height:17px;background:#ff8c00;box-shadow:1px 1px 0 #fff"><svg width="14" height="17" style="position:absolute;left:0;top:0"><path d="M7 3.500 v11 M4.500 6 l2.500 -2.800 l2.500 2.800" fill="none" stroke="#000" stroke-width="1.150"/></svg></div>
<div class="fld" style="left:546px;top:614px;width:150px;height:31px"><span style="position:absolute;left:6px;top:1.700px;letter-spacing:-0.42px">2.8527 ns</span></div>
<div class="tb" style="left:698px;top:614px;width:19px;height:30px"><svg width="19" height="30"><polygon points="12,9 12,20 6,14.500" fill="#000"/></svg></div>
<div class="tb" style="left:719px;top:614px;width:19px;height:30px;font-size:15px;line-height:27px;text-align:center">0</div>
<div class="tb" style="left:740px;top:614px;width:19px;height:30px"><svg width="19" height="30"><polygon points="6,9 6,20 12,14.500" fill="#000"/></svg></div>
<div class="tb" style="left:826px;top:615px;width:25px;height:27px;background:#f4f4f4"><div style="position:absolute;left:2px;top:2px;width:19px;height:21px;background:#000;color:#2a6cf0;font-size:20px;line-height:20px;text-align:center;-webkit-text-stroke:0.4px #2a6cf0">T</div></div>
<div class="fld" style="left:853px;top:614px;width:87px;height:31px;color:#2a6cf0"><span style="position:absolute;left:5px;top:1.700px;letter-spacing:-0.2px">0.0 V</span></div>
<div class="tb" style="left:942px;top:614px;width:26px;height:14px"><svg width="26" height="14"><polygon points="7,9 17,9 12,3.500" fill="#000"/></svg></div>
<div class="tb" style="left:942px;top:630px;width:26px;height:14px"><svg width="26" height="14"><polygon points="7,4 17,4 12,9.500" fill="#000"/></svg></div>
<div class="sunk" style="left:977px;top:616px;width:14px;height:17px"><svg width="14" height="17" style="position:absolute;left:-1px;top:-1px"><path d="M7.500 3.500 v11 M5 6 l2.500 -2.800 l2.500 2.800" fill="none" stroke="#000" stroke-width="1.150"/></svg></div>
<div class="tab" style="left:83px;top:650px;width:56px;height:25px;background:#303030;color:#fff;border-right:1px solid #fff;padding:3px 0 0 6px;letter-spacing:-0.2px">Status</div>
<div class="tab" style="left:140px;top:652px;width:53px;height:22px;background:#f0f0f0;color:#000;border-right:1px solid #8c8c8c;border-top:1px solid #fff;padding:0 0 0 4px;letter-spacing:-0.75px">Scales</div>
<div class="fld" style="left:575px;top:68px;width:114px;height:31px;color:#2a6cf0;box-shadow:0 0 0 1px #dcdcdc"><span style="position:absolute;left:6px;top:2px;letter-spacing:-0.4px">100 mV/</span></div>
<div class="tb" style="left:691px;top:68px;width:26px;height:14px"><svg width="26" height="14"><path d="M6 8 C6.500 1.500 12 1 13.500 7 C15 13 19 12.500 19.500 6.500" fill="none" stroke="#000" stroke-width="1.200"/></svg></div>
<div class="tb" style="left:691px;top:84px;width:26px;height:14px"><svg width="26" height="14"><path d="M7 8 C9 4.500 11.500 4.500 13 7 C14.500 9.500 17 9.500 19 6" fill="none" stroke="#000" stroke-width="1.200"/></svg></div>
<div id="wl" class="abs"></div><div id="wt" class="abs"></div><div id="wm" class="abs"></div>
<div id="whiteR" class="abs"></div>
<div id="whiteB" class="abs"></div>
<div id="frame" class="abs"></div>
</body>
</html>
